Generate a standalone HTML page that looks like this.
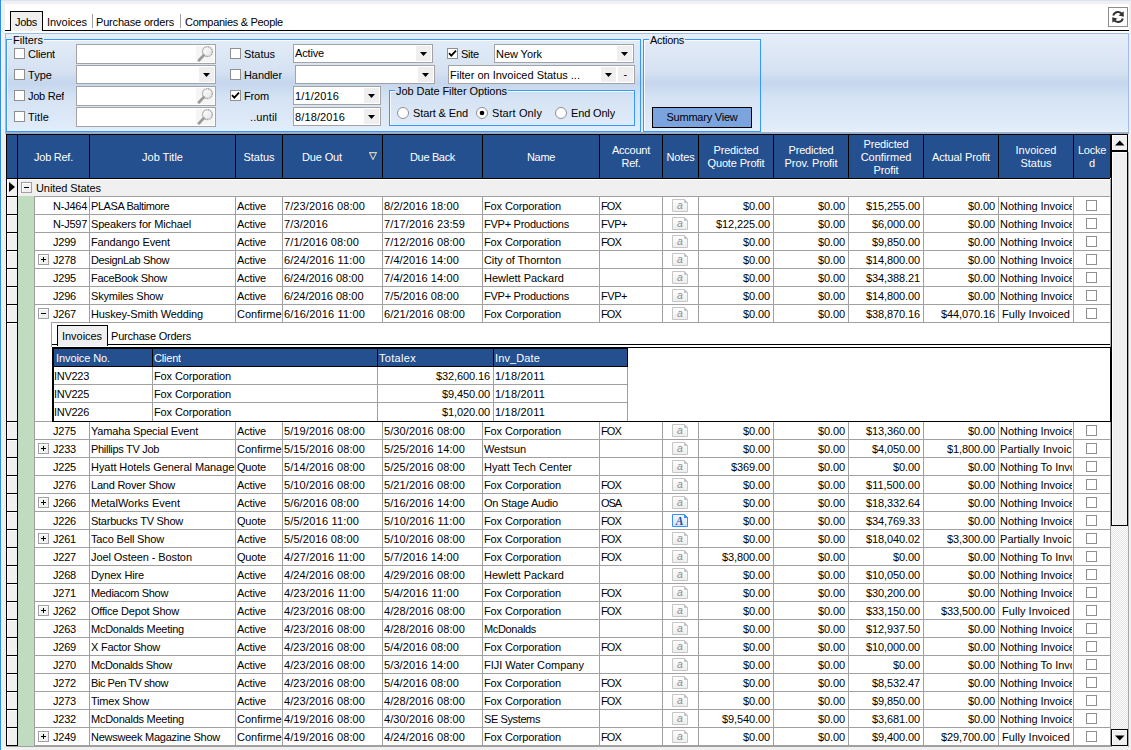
<!DOCTYPE html>
<html><head><meta charset="utf-8">
<style>
html,body{margin:0;padding:0;width:1131px;height:750px;overflow:hidden;background:#f0f0f0}
body{position:relative;font-family:"Liberation Sans",sans-serif;font-size:11px;color:#000}
div{position:absolute}
svg{position:absolute}
.t{white-space:nowrap;overflow:hidden}
.tab{line-height:18px}
.gl{line-height:13px;background:transparent}
.fl{line-height:14px}
.cell{line-height:17px}
.r{text-align:right}
.hd{color:#fff;text-align:center;line-height:13px}
.hds{color:#fff;line-height:17px}
</style></head><body>
<svg width="0" height="0" style="position:absolute;left:0;top:0"><defs>
<linearGradient id="nb" x1="0" y1="0" x2="0" y2="1"><stop offset="0" stop-color="#f4f9ff"/><stop offset="1" stop-color="#d2e5fb"/></linearGradient>
<linearGradient id="ng" x1="0" y1="0" x2="0" y2="1"><stop offset="0" stop-color="#ffffff"/><stop offset="1" stop-color="#ededed"/></linearGradient>
<linearGradient id="mg" x1="0" y1="0" x2="1" y2="1"><stop offset="0" stop-color="#fff"/><stop offset="1" stop-color="#e4e4e4"/></linearGradient>
</defs></svg>
<div style="left:0px;top:0px;width:1131px;height:750px;background:#f0f0f0"></div>
<div style="left:0px;top:0px;width:1px;height:750px;background:#2c8cf4"></div>
<div style="left:1px;top:0px;width:1130px;height:1px;background:#d6e4f5"></div>
<div style="left:1px;top:1px;width:1px;height:749px;background:#fbf6f0"></div>
<div style="left:5px;top:4px;width:1124px;height:128px;background:#fff"></div>
<div style="left:5px;top:30px;width:5px;height:1px;background:#000"></div>
<div style="left:42px;top:30px;width:1087px;height:1px;background:#000"></div>
<div style="left:10px;top:11px;width:33px;height:20px;background:#000"></div>
<div style="left:11px;top:12px;width:31px;height:19px;background:#efefef"></div>
<div class="t tab" style="left:15px;top:13px;"><span style="letter-spacing:-0.31px">Jobs</span></div>
<div class="t tab" style="left:47px;top:13px;"><span style="letter-spacing:-0.04px">Invoices</span></div>
<div style="left:92px;top:14px;width:1px;height:14px;background:#a0a0a0"></div>
<div class="t tab" style="left:96px;top:13px;"><span style="letter-spacing:-0.18px">Purchase orders</span></div>
<div style="left:180px;top:14px;width:1px;height:14px;background:#a0a0a0"></div>
<div class="t tab" style="left:185px;top:13px;"><span style="letter-spacing:-0.3px">Companies &amp; People</span></div>
<div style="left:1108px;top:7px;width:20px;height:20px;border:1px solid #8c8c8c;box-sizing:border-box;background:#fff"></div>
<svg style="position:absolute;left:1110px;top:9px" width="16" height="16" viewBox="0 0 16 16">
<path d="M3.2 6.6 A5 5 0 0 1 12.2 5.2" fill="none" stroke="#333" stroke-width="2"/>
<path d="M13.6 2.2 L13.8 7.8 L8.6 6.6 Z" fill="#333"/>
<path d="M12.8 9.4 A5 5 0 0 1 3.8 10.8" fill="none" stroke="#333" stroke-width="2"/>
<path d="M2.4 13.8 L2.2 8.2 L7.4 9.4 Z" fill="#333"/>
</svg>
<div style="left:5px;top:33px;width:1124px;height:100px;background:linear-gradient(#e5eef9 0%,#d6e2f2 38%,#c5d6ed 50%,#d4e2f3 64%,#e1ecfa 96%,#eaf2fd 100%);border:1px solid #9ebde6;border-bottom-color:#8db3e4;box-sizing:border-box"></div>
<div style="left:5px;top:133px;width:1124px;height:1px;background:#a8a8a8"></div>
<div style="left:6px;top:39px;width:635px;height:93px;border:1px solid #3399ff;box-sizing:border-box;box-shadow:inset 1px 1px 0 rgba(255,255,255,.8)"></div>
<div class="t gl" style="left:12px;top:34px;background:linear-gradient(#e4edf9,#dfe9f6);padding:0 1px 0 1px"><span style="letter-spacing:0.01px">Filters</span></div>
<div style="left:643px;top:39px;width:118px;height:93px;border:1px solid #3399ff;box-sizing:border-box;box-shadow:inset 1px 1px 0 rgba(255,255,255,.8)"></div>
<div class="t gl" style="left:649px;top:34px;background:linear-gradient(#e4edf9,#dfe9f6);padding:0 1px 0 1px"><span style="letter-spacing:-0.3px">Actions</span></div>
<div style="left:389px;top:90px;width:246px;height:36px;border:1px solid #3399ff;box-sizing:border-box;box-shadow:inset 1px 1px 0 rgba(255,255,255,.8)"></div>
<div class="t gl" style="left:395px;top:85px;background:linear-gradient(#c6d7ed,#d3e1f3);padding:0 1px 0 1px"><span style="letter-spacing:-0.07px">Job Date Filter Options</span></div>
<div style="left:14px;top:48px;width:11px;height:11px;border:1px solid #8f8f8f;box-sizing:border-box;background:#fff"></div>
<div class="t fl" style="left:28px;top:47px;"><span style="letter-spacing:-0.19px">Client</span></div>
<div style="left:76px;top:44px;width:140px;height:20px;border:1px solid #a3a3a3;box-sizing:border-box;background:#fff"></div>
<div style="left:196px;top:46px;width:18px;height:16px;background:#f5f5f5"></div>
<svg style="position:absolute;left:196px;top:46px" width="18" height="16" viewBox="0 0 18 16">
<circle cx="11.4" cy="5.6" r="4.9" fill="url(#mg)" stroke="#a8a8a8" stroke-width="1.3" stroke-dasharray="1.6 0.5"/>
<path d="M7.6 9.4 L3 14.2" stroke="#9a9a9a" stroke-width="2.8" stroke-linecap="round"/>
</svg>
<div style="left:14px;top:69px;width:11px;height:11px;border:1px solid #8f8f8f;box-sizing:border-box;background:#fff"></div>
<div class="t fl" style="left:28px;top:68px;"><span style="letter-spacing:0.04px">Type</span></div>
<div style="left:76px;top:65px;width:140px;height:19px;border:1px solid #a3a3a3;box-sizing:border-box;background:#fff"></div>
<div style="left:199px;top:67px;width:15px;height:15px;background:#efefef"></div>
<svg style="position:absolute;left:203px;top:73px" width="7" height="4" viewBox="0 0 7 4"><path d="M0 0 H7 L3.5 4 Z" fill="#000"/></svg>
<div style="left:14px;top:90px;width:11px;height:11px;border:1px solid #8f8f8f;box-sizing:border-box;background:#fff"></div>
<div class="t fl" style="left:28px;top:89px;"><span style="letter-spacing:-0.27px">Job Ref</span></div>
<div style="left:76px;top:86px;width:140px;height:20px;border:1px solid #a3a3a3;box-sizing:border-box;background:#fff"></div>
<div style="left:196px;top:88px;width:18px;height:16px;background:#f5f5f5"></div>
<svg style="position:absolute;left:196px;top:88px" width="18" height="16" viewBox="0 0 18 16">
<circle cx="11.4" cy="5.6" r="4.9" fill="url(#mg)" stroke="#a8a8a8" stroke-width="1.3" stroke-dasharray="1.6 0.5"/>
<path d="M7.6 9.4 L3 14.2" stroke="#9a9a9a" stroke-width="2.8" stroke-linecap="round"/>
</svg>
<div style="left:14px;top:111px;width:11px;height:11px;border:1px solid #8f8f8f;box-sizing:border-box;background:#fff"></div>
<div class="t fl" style="left:28px;top:110px;"><span style="letter-spacing:0.12px">Title</span></div>
<div style="left:76px;top:107px;width:140px;height:20px;border:1px solid #a3a3a3;box-sizing:border-box;background:#fff"></div>
<div style="left:196px;top:109px;width:18px;height:16px;background:#f5f5f5"></div>
<svg style="position:absolute;left:196px;top:109px" width="18" height="16" viewBox="0 0 18 16">
<circle cx="11.4" cy="5.6" r="4.9" fill="url(#mg)" stroke="#a8a8a8" stroke-width="1.3" stroke-dasharray="1.6 0.5"/>
<path d="M7.6 9.4 L3 14.2" stroke="#9a9a9a" stroke-width="2.8" stroke-linecap="round"/>
</svg>
<div style="left:230px;top:48px;width:11px;height:11px;border:1px solid #8f8f8f;box-sizing:border-box;background:#fff"></div>
<div class="t fl" style="left:244px;top:47px;"><span style="letter-spacing:-0.03px">Status</span></div>
<div style="left:293px;top:44px;width:140px;height:19px;border:1px solid #a3a3a3;box-sizing:border-box;background:#fff"></div>
<div style="left:416px;top:46px;width:15px;height:15px;background:#efefef"></div>
<svg style="position:absolute;left:420px;top:52px" width="7" height="4" viewBox="0 0 7 4"><path d="M0 0 H7 L3.5 4 Z" fill="#000"/></svg>
<div class="t fl" style="left:295px;top:46px;"><span style="letter-spacing:-0.16px">Active</span></div>
<div style="left:230px;top:69px;width:11px;height:11px;border:1px solid #8f8f8f;box-sizing:border-box;background:#fff"></div>
<div class="t fl" style="left:244px;top:68px;"><span style="letter-spacing:-0.08px">Handler</span></div>
<div style="left:295px;top:65px;width:140px;height:19px;border:1px solid #a3a3a3;box-sizing:border-box;background:#fff"></div>
<div style="left:418px;top:67px;width:15px;height:15px;background:#efefef"></div>
<svg style="position:absolute;left:422px;top:73px" width="7" height="4" viewBox="0 0 7 4"><path d="M0 0 H7 L3.5 4 Z" fill="#000"/></svg>
<div style="left:230px;top:90px;width:11px;height:11px;border:1px solid #8f8f8f;box-sizing:border-box;background:#fff"></div>
<svg style="position:absolute;left:231px;top:91px" width="9" height="9" viewBox="0 0 9 9"><path d="M1 4.2 L3.3 6.6 L8 1.6" fill="none" stroke="#000" stroke-width="1.8"/></svg>
<div class="t fl" style="left:244px;top:89px;"><span style="letter-spacing:-0.17px">From</span></div>
<div style="left:293px;top:86px;width:88px;height:19px;border:1px solid #a3a3a3;box-sizing:border-box;background:#fff"></div>
<div style="left:364px;top:88px;width:15px;height:15px;background:#efefef"></div>
<svg style="position:absolute;left:368px;top:94px" width="7" height="4" viewBox="0 0 7 4"><path d="M0 0 H7 L3.5 4 Z" fill="#000"/></svg>
<div class="t fl" style="left:295px;top:89px;"><span style="letter-spacing:0.15px">1/1/2016</span></div>
<div class="t fl" style="left:250px;top:110px;"><span style="letter-spacing:0.1px">..until</span></div>
<div style="left:293px;top:107px;width:88px;height:19px;border:1px solid #a3a3a3;box-sizing:border-box;background:#fff"></div>
<div style="left:364px;top:109px;width:15px;height:15px;background:#efefef"></div>
<svg style="position:absolute;left:368px;top:115px" width="7" height="4" viewBox="0 0 7 4"><path d="M0 0 H7 L3.5 4 Z" fill="#000"/></svg>
<div class="t fl" style="left:295px;top:110px;"><span style="letter-spacing:0.12px">8/18/2016</span></div>
<div style="left:447px;top:48px;width:11px;height:11px;border:1px solid #8f8f8f;box-sizing:border-box;background:#fff"></div>
<svg style="position:absolute;left:448px;top:49px" width="9" height="9" viewBox="0 0 9 9"><path d="M1 4.2 L3.3 6.6 L8 1.6" fill="none" stroke="#000" stroke-width="1.8"/></svg>
<div class="t fl" style="left:461px;top:47px;"><span style="letter-spacing:-0.24px">Site</span></div>
<div style="left:494px;top:44px;width:140px;height:19px;border:1px solid #a3a3a3;box-sizing:border-box;background:#fff"></div>
<div style="left:617px;top:46px;width:15px;height:15px;background:#efefef"></div>
<svg style="position:absolute;left:621px;top:52px" width="7" height="4" viewBox="0 0 7 4"><path d="M0 0 H7 L3.5 4 Z" fill="#000"/></svg>
<div class="t fl" style="left:496px;top:47px;"><span style="letter-spacing:-0.06px">New York</span></div>
<div style="left:448px;top:65px;width:187px;height:19px;border:1px solid #a3a3a3;box-sizing:border-box;background:#fff"></div>
<div class="t fl" style="left:450px;top:68px;"><span style="letter-spacing:-0.01px">Filter on Invoiced Status ...</span></div>
<div style="left:601px;top:67px;width:15px;height:15px;background:#efefef"></div>
<svg style="position:absolute;left:605px;top:73px" width="7" height="4" viewBox="0 0 7 4"><path d="M0 0 H7 L3.5 4 Z" fill="#000"/></svg>
<div style="left:618px;top:67px;width:15px;height:15px;background:#efefef"></div>
<div class="t fl" style="left:618px;top:67px;width:15px;text-align:center"><span style="letter-spacing:0.33px">-</span></div>
<svg style="position:absolute;left:397px;top:107px" width="12" height="12" viewBox="0 0 12 12"><circle cx="6" cy="6" r="5.5" fill="#fff" stroke="#8f8f8f" stroke-width="1"/></svg>
<div class="t fl" style="left:413px;top:106px;"><span style="letter-spacing:-0.12px">Start &amp; End</span></div>
<svg style="position:absolute;left:476px;top:107px" width="12" height="12" viewBox="0 0 12 12"><circle cx="6" cy="6" r="5.5" fill="#fff" stroke="#8f8f8f" stroke-width="1"/><circle cx="6" cy="6" r="2.3" fill="#000"/></svg>
<div class="t fl" style="left:492px;top:106px;"><span style="letter-spacing:0.11px">Start Only</span></div>
<svg style="position:absolute;left:555px;top:107px" width="12" height="12" viewBox="0 0 12 12"><circle cx="6" cy="6" r="5.5" fill="#fff" stroke="#8f8f8f" stroke-width="1"/></svg>
<div class="t fl" style="left:571px;top:106px;"><span style="letter-spacing:-0.16px">End Only</span></div>
<div style="left:652px;top:107px;width:100px;height:21px;border:1px solid #000;box-sizing:border-box;background:#7ba4df"></div>
<div class="t fl" style="left:652px;top:110px;width:100px;text-align:center"><span style="letter-spacing:-0.23px">Summary View</span></div>
<div style="left:6px;top:134px;width:1106px;height:613px;background:#fff"></div>
<div style="left:6px;top:134px;width:1106px;height:1px;background:#000"></div>
<div style="left:6px;top:134px;width:1px;height:612px;background:#000"></div>
<div style="left:7px;top:135px;width:1103px;height:43px;background:#24508f"></div>
<div style="left:6px;top:178px;width:1104px;height:1px;background:#000"></div>
<div style="left:17px;top:135px;width:1px;height:43px;background:#000"></div>
<div style="left:89px;top:135px;width:1px;height:43px;background:#000"></div>
<div style="left:235px;top:135px;width:1px;height:43px;background:#000"></div>
<div style="left:282px;top:135px;width:1px;height:43px;background:#000"></div>
<div style="left:382px;top:135px;width:1px;height:43px;background:#000"></div>
<div style="left:482px;top:135px;width:1px;height:43px;background:#000"></div>
<div style="left:599px;top:135px;width:1px;height:43px;background:#000"></div>
<div style="left:662px;top:135px;width:1px;height:43px;background:#000"></div>
<div style="left:698px;top:135px;width:1px;height:43px;background:#000"></div>
<div style="left:773px;top:135px;width:1px;height:43px;background:#000"></div>
<div style="left:848px;top:135px;width:1px;height:43px;background:#000"></div>
<div style="left:923px;top:135px;width:1px;height:43px;background:#000"></div>
<div style="left:998px;top:135px;width:1px;height:43px;background:#000"></div>
<div style="left:1073px;top:135px;width:1px;height:43px;background:#000"></div>
<div style="left:1110px;top:135px;width:1px;height:43px;background:#000"></div>
<div style="left:1111px;top:135px;width:1px;height:43px;background:#000"></div>
<div class="t hd" style="left:18px;top:151px;width:71px;"><span style="letter-spacing:-0.25px">Job Ref.</span></div>
<div class="t hd" style="left:90px;top:151px;width:145px;">Job Title</div>
<div class="t hd" style="left:236px;top:151px;width:46px;"><span style="letter-spacing:-0.03px">Status</span></div>
<div class="t hd" style="left:283px;top:151px;width:78px;"><span style="letter-spacing:-0.14px">Due Out</span></div>
<div class="t hd" style="left:383px;top:151px;width:99px;"><span style="letter-spacing:-0.34px">Due Back</span></div>
<div class="t hd" style="left:483px;top:151px;width:116px;"><span style="letter-spacing:-0.34px">Name</span></div>
<div class="t hd" style="left:600px;top:144px;width:62px;"><span style="letter-spacing:-0.25px">Account</span><br><span style="letter-spacing:-0.3px">Ref.</span></div>
<div class="t hd" style="left:663px;top:151px;width:35px;"><span style="letter-spacing:-0.15px">Notes</span></div>
<div class="t hd" style="left:699px;top:144px;width:74px;"><span style="letter-spacing:-0.16px">Predicted</span><br><span style="letter-spacing:-0.14px">Quote Profit</span></div>
<div class="t hd" style="left:774px;top:144px;width:74px;"><span style="letter-spacing:-0.16px">Predicted</span><br><span style="letter-spacing:-0.05px">Prov. Profit</span></div>
<div class="t hd" style="left:849px;top:138px;width:74px;"><span style="letter-spacing:-0.16px">Predicted</span><br>Confirmed<br><span style="letter-spacing:-0.11px">Profit</span></div>
<div class="t hd" style="left:924px;top:151px;width:74px;"><span style="letter-spacing:-0.1px">Actual Profit</span></div>
<div class="t hd" style="left:999px;top:144px;width:74px;">Invoiced<br><span style="letter-spacing:-0.03px">Status</span></div>
<div class="t hd" style="left:1074px;top:144px;width:36px;"><span style="letter-spacing:-0.27px">Locke</span><br><span style="letter-spacing:-0.12px">d</span></div>
<svg style="position:absolute;left:369px;top:152px" width="8" height="8" viewBox="0 0 8 8"><path d="M0.5 0.6 H7.5 L4 7.5 Z" fill="none" stroke="#d9d0b8" stroke-width="1.1"/></svg>
<div style="left:6px;top:178px;width:12px;height:19px;background:#000"></div>
<div style="left:7px;top:179px;width:10px;height:17px;background:#fff"></div>
<div style="left:8px;top:180px;width:9px;height:16px;background:#f0f0f0"></div>
<svg style="position:absolute;left:9px;top:182px" width="7" height="10" viewBox="0 0 7 10"><path d="M0 0 L6 5 L0 10 Z" fill="#000"/></svg>
<div style="left:18px;top:179px;width:1092px;height:17px;background:#f0f0f0"></div>
<div style="left:18px;top:179px;width:1092px;height:1px;background:#fff"></div>
<div style="left:18px;top:196px;width:1092px;height:1px;background:#a0a0a0"></div>
<div style="left:21px;top:182px;width:11px;height:11px;border:1px solid #a0a0a0;box-sizing:border-box;background:#f0f0f0;box-shadow:inset 1px 1px 0 #fff"></div>
<div style="left:24px;top:187px;width:5px;height:1px;background:#000"></div>
<div class="t cell" style="left:36px;top:180px;"><span style="letter-spacing:-0.08px">United States</span></div>
<div style="left:18px;top:196px;width:16px;height:550px;background:#c0dcc0"></div>
<div style="left:34px;top:196px;width:1px;height:550px;background:#a0a0a0"></div>
<div style="left:6px;top:196px;width:12px;height:19px;background:#000"></div>
<div style="left:7px;top:197px;width:10px;height:17px;background:#fff"></div>
<div style="left:8px;top:198px;width:9px;height:16px;background:#f0f0f0"></div>
<div style="left:35px;top:214px;width:1075px;height:1px;background:#a0a0a0"></div>
<div style="left:89px;top:197px;width:1px;height:17px;background:#a0a0a0"></div>
<div style="left:235px;top:197px;width:1px;height:17px;background:#a0a0a0"></div>
<div style="left:282px;top:197px;width:1px;height:17px;background:#a0a0a0"></div>
<div style="left:382px;top:197px;width:1px;height:17px;background:#a0a0a0"></div>
<div style="left:482px;top:197px;width:1px;height:17px;background:#a0a0a0"></div>
<div style="left:599px;top:197px;width:1px;height:17px;background:#a0a0a0"></div>
<div style="left:662px;top:197px;width:1px;height:17px;background:#a0a0a0"></div>
<div style="left:698px;top:197px;width:1px;height:17px;background:#a0a0a0"></div>
<div style="left:773px;top:197px;width:1px;height:17px;background:#a0a0a0"></div>
<div style="left:848px;top:197px;width:1px;height:17px;background:#a0a0a0"></div>
<div style="left:923px;top:197px;width:1px;height:17px;background:#a0a0a0"></div>
<div style="left:998px;top:197px;width:1px;height:17px;background:#a0a0a0"></div>
<div style="left:1073px;top:197px;width:1px;height:17px;background:#a0a0a0"></div>
<div class="t cell" style="left:53px;top:198px;width:36px;"><span style="letter-spacing:-0.24px">N-J464</span></div>
<div class="t cell" style="left:91px;top:198px;width:144px;"><span style="letter-spacing:-0.42px">PLASA Baltimore</span></div>
<div class="t cell" style="left:237px;top:198px;width:45px;"><span style="letter-spacing:-0.16px">Active</span></div>
<div class="t cell" style="left:284px;top:198px;width:98px;"><span style="letter-spacing:0.1px">7/23/2016 08:00</span></div>
<div class="t cell" style="left:384px;top:198px;width:98px;"><span style="letter-spacing:0.11px">8/2/2016 18:00</span></div>
<div class="t cell" style="left:484px;top:198px;width:115px;"><span style="letter-spacing:-0.12px">Fox Corporation</span></div>
<div class="t cell" style="left:601px;top:198px;width:61px;"><span style="letter-spacing:-0.88px">FOX</span></div>
<svg style="position:absolute;left:672px;top:199px" width="16" height="14" viewBox="0 0 16 14">
<path d="M0.5 0.5 H12.5 L15.5 3.5 V12.5 H0.5 Z" fill="url(#ng)" stroke="#c6c6c6" stroke-width="1"/>
<path d="M12.5 0.5 L15.5 3.5 H12.5 Z" fill="#bcbcbc" stroke="#c6c6c6" stroke-width="1" stroke-linejoin="round"/>
<text x="7.8" y="10.2" text-anchor="middle" font-family="Liberation Sans" font-style="italic" font-size="10.5" fill="#8e8e8e">a</text>
</svg>
<div class="t cell r" style="left:699px;top:198px;width:71px;"><span style="letter-spacing:-0.11px">$0.00</span></div>
<div class="t cell r" style="left:774px;top:198px;width:71px;"><span style="letter-spacing:-0.11px">$0.00</span></div>
<div class="t cell r" style="left:849px;top:198px;width:71px;"><span style="letter-spacing:-0.11px">$15,255.00</span></div>
<div class="t cell r" style="left:924px;top:198px;width:71px;"><span style="letter-spacing:-0.11px">$0.00</span></div>
<div class="t cell" style="left:1000px;top:198px;width:72px;"><span style="letter-spacing:-0.06px">Nothing Invoiced</span></div>
<div style="left:1086px;top:200px;width:11px;height:11px;border:1px solid #8f8f8f;box-sizing:border-box;background:#fff"></div>
<div style="left:6px;top:214px;width:12px;height:19px;background:#000"></div>
<div style="left:7px;top:215px;width:10px;height:17px;background:#fff"></div>
<div style="left:8px;top:216px;width:9px;height:16px;background:#f0f0f0"></div>
<div style="left:35px;top:232px;width:1075px;height:1px;background:#a0a0a0"></div>
<div style="left:89px;top:215px;width:1px;height:17px;background:#a0a0a0"></div>
<div style="left:235px;top:215px;width:1px;height:17px;background:#a0a0a0"></div>
<div style="left:282px;top:215px;width:1px;height:17px;background:#a0a0a0"></div>
<div style="left:382px;top:215px;width:1px;height:17px;background:#a0a0a0"></div>
<div style="left:482px;top:215px;width:1px;height:17px;background:#a0a0a0"></div>
<div style="left:599px;top:215px;width:1px;height:17px;background:#a0a0a0"></div>
<div style="left:662px;top:215px;width:1px;height:17px;background:#a0a0a0"></div>
<div style="left:698px;top:215px;width:1px;height:17px;background:#a0a0a0"></div>
<div style="left:773px;top:215px;width:1px;height:17px;background:#a0a0a0"></div>
<div style="left:848px;top:215px;width:1px;height:17px;background:#a0a0a0"></div>
<div style="left:923px;top:215px;width:1px;height:17px;background:#a0a0a0"></div>
<div style="left:998px;top:215px;width:1px;height:17px;background:#a0a0a0"></div>
<div style="left:1073px;top:215px;width:1px;height:17px;background:#a0a0a0"></div>
<div class="t cell" style="left:53px;top:216px;width:36px;"><span style="letter-spacing:-0.24px">N-J597</span></div>
<div class="t cell" style="left:91px;top:216px;width:144px;"><span style="letter-spacing:-0.17px">Speakers for Michael</span></div>
<div class="t cell" style="left:237px;top:216px;width:45px;"><span style="letter-spacing:-0.16px">Active</span></div>
<div class="t cell" style="left:284px;top:216px;width:98px;"><span style="letter-spacing:0.15px">7/3/2016</span></div>
<div class="t cell" style="left:384px;top:216px;width:98px;"><span style="letter-spacing:0.1px">7/17/2016 23:59</span></div>
<div class="t cell" style="left:484px;top:216px;width:115px;"><span style="letter-spacing:-0.25px">FVP+ Productions</span></div>
<div class="t cell" style="left:601px;top:216px;width:61px;"><span style="letter-spacing:-0.46px">FVP+</span></div>
<svg style="position:absolute;left:672px;top:217px" width="16" height="14" viewBox="0 0 16 14">
<path d="M0.5 0.5 H12.5 L15.5 3.5 V12.5 H0.5 Z" fill="url(#ng)" stroke="#c6c6c6" stroke-width="1"/>
<path d="M12.5 0.5 L15.5 3.5 H12.5 Z" fill="#bcbcbc" stroke="#c6c6c6" stroke-width="1" stroke-linejoin="round"/>
<text x="7.8" y="10.2" text-anchor="middle" font-family="Liberation Sans" font-style="italic" font-size="10.5" fill="#8e8e8e">a</text>
</svg>
<div class="t cell r" style="left:699px;top:216px;width:71px;"><span style="letter-spacing:-0.11px">$12,225.00</span></div>
<div class="t cell r" style="left:774px;top:216px;width:71px;"><span style="letter-spacing:-0.11px">$0.00</span></div>
<div class="t cell r" style="left:849px;top:216px;width:71px;"><span style="letter-spacing:-0.1px">$6,000.00</span></div>
<div class="t cell r" style="left:924px;top:216px;width:71px;"><span style="letter-spacing:-0.11px">$0.00</span></div>
<div class="t cell" style="left:1000px;top:216px;width:72px;"><span style="letter-spacing:-0.06px">Nothing Invoiced</span></div>
<div style="left:1086px;top:218px;width:11px;height:11px;border:1px solid #8f8f8f;box-sizing:border-box;background:#fff"></div>
<div style="left:6px;top:232px;width:12px;height:19px;background:#000"></div>
<div style="left:7px;top:233px;width:10px;height:17px;background:#fff"></div>
<div style="left:8px;top:234px;width:9px;height:16px;background:#f0f0f0"></div>
<div style="left:35px;top:250px;width:1075px;height:1px;background:#a0a0a0"></div>
<div style="left:89px;top:233px;width:1px;height:17px;background:#a0a0a0"></div>
<div style="left:235px;top:233px;width:1px;height:17px;background:#a0a0a0"></div>
<div style="left:282px;top:233px;width:1px;height:17px;background:#a0a0a0"></div>
<div style="left:382px;top:233px;width:1px;height:17px;background:#a0a0a0"></div>
<div style="left:482px;top:233px;width:1px;height:17px;background:#a0a0a0"></div>
<div style="left:599px;top:233px;width:1px;height:17px;background:#a0a0a0"></div>
<div style="left:662px;top:233px;width:1px;height:17px;background:#a0a0a0"></div>
<div style="left:698px;top:233px;width:1px;height:17px;background:#a0a0a0"></div>
<div style="left:773px;top:233px;width:1px;height:17px;background:#a0a0a0"></div>
<div style="left:848px;top:233px;width:1px;height:17px;background:#a0a0a0"></div>
<div style="left:923px;top:233px;width:1px;height:17px;background:#a0a0a0"></div>
<div style="left:998px;top:233px;width:1px;height:17px;background:#a0a0a0"></div>
<div style="left:1073px;top:233px;width:1px;height:17px;background:#a0a0a0"></div>
<div class="t cell" style="left:53px;top:234px;width:36px;"><span style="letter-spacing:-0.21px">J299</span></div>
<div class="t cell" style="left:91px;top:234px;width:144px;"><span style="letter-spacing:-0.12px">Fandango Event</span></div>
<div class="t cell" style="left:237px;top:234px;width:45px;"><span style="letter-spacing:-0.16px">Active</span></div>
<div class="t cell" style="left:284px;top:234px;width:98px;"><span style="letter-spacing:0.11px">7/1/2016 08:00</span></div>
<div class="t cell" style="left:384px;top:234px;width:98px;"><span style="letter-spacing:0.1px">7/12/2016 08:00</span></div>
<div class="t cell" style="left:484px;top:234px;width:115px;"><span style="letter-spacing:-0.12px">Fox Corporation</span></div>
<div class="t cell" style="left:601px;top:234px;width:61px;"><span style="letter-spacing:-0.88px">FOX</span></div>
<svg style="position:absolute;left:672px;top:235px" width="16" height="14" viewBox="0 0 16 14">
<path d="M0.5 0.5 H12.5 L15.5 3.5 V12.5 H0.5 Z" fill="url(#ng)" stroke="#c6c6c6" stroke-width="1"/>
<path d="M12.5 0.5 L15.5 3.5 H12.5 Z" fill="#bcbcbc" stroke="#c6c6c6" stroke-width="1" stroke-linejoin="round"/>
<text x="7.8" y="10.2" text-anchor="middle" font-family="Liberation Sans" font-style="italic" font-size="10.5" fill="#8e8e8e">a</text>
</svg>
<div class="t cell r" style="left:699px;top:234px;width:71px;"><span style="letter-spacing:-0.11px">$0.00</span></div>
<div class="t cell r" style="left:774px;top:234px;width:71px;"><span style="letter-spacing:-0.11px">$0.00</span></div>
<div class="t cell r" style="left:849px;top:234px;width:71px;"><span style="letter-spacing:-0.1px">$9,850.00</span></div>
<div class="t cell r" style="left:924px;top:234px;width:71px;"><span style="letter-spacing:-0.11px">$0.00</span></div>
<div class="t cell" style="left:1000px;top:234px;width:72px;"><span style="letter-spacing:-0.06px">Nothing Invoiced</span></div>
<div style="left:1086px;top:236px;width:11px;height:11px;border:1px solid #8f8f8f;box-sizing:border-box;background:#fff"></div>
<div style="left:6px;top:250px;width:12px;height:19px;background:#000"></div>
<div style="left:7px;top:251px;width:10px;height:17px;background:#fff"></div>
<div style="left:8px;top:252px;width:9px;height:16px;background:#f0f0f0"></div>
<div style="left:35px;top:268px;width:1075px;height:1px;background:#a0a0a0"></div>
<div style="left:89px;top:251px;width:1px;height:17px;background:#a0a0a0"></div>
<div style="left:235px;top:251px;width:1px;height:17px;background:#a0a0a0"></div>
<div style="left:282px;top:251px;width:1px;height:17px;background:#a0a0a0"></div>
<div style="left:382px;top:251px;width:1px;height:17px;background:#a0a0a0"></div>
<div style="left:482px;top:251px;width:1px;height:17px;background:#a0a0a0"></div>
<div style="left:599px;top:251px;width:1px;height:17px;background:#a0a0a0"></div>
<div style="left:662px;top:251px;width:1px;height:17px;background:#a0a0a0"></div>
<div style="left:698px;top:251px;width:1px;height:17px;background:#a0a0a0"></div>
<div style="left:773px;top:251px;width:1px;height:17px;background:#a0a0a0"></div>
<div style="left:848px;top:251px;width:1px;height:17px;background:#a0a0a0"></div>
<div style="left:923px;top:251px;width:1px;height:17px;background:#a0a0a0"></div>
<div style="left:998px;top:251px;width:1px;height:17px;background:#a0a0a0"></div>
<div style="left:1073px;top:251px;width:1px;height:17px;background:#a0a0a0"></div>
<div style="left:38px;top:254px;width:11px;height:11px;border:1px solid #a0a0a0;box-sizing:border-box;background:#f0f0f0;box-shadow:inset 1px 1px 0 #fff"></div>
<div style="left:41px;top:259px;width:5px;height:1px;background:#000"></div>
<div style="left:43px;top:257px;width:1px;height:5px;background:#000"></div>
<div class="t cell" style="left:53px;top:252px;width:36px;"><span style="letter-spacing:-0.21px">J278</span></div>
<div class="t cell" style="left:91px;top:252px;width:144px;"><span style="letter-spacing:-0.37px">DesignLab Show</span></div>
<div class="t cell" style="left:237px;top:252px;width:45px;"><span style="letter-spacing:-0.16px">Active</span></div>
<div class="t cell" style="left:284px;top:252px;width:98px;"><span style="letter-spacing:0.15px">6/24/2016 11:00</span></div>
<div class="t cell" style="left:384px;top:252px;width:98px;"><span style="letter-spacing:0.11px">7/4/2016 14:00</span></div>
<div class="t cell" style="left:484px;top:252px;width:115px;"><span style="letter-spacing:-0.07px">City of Thornton</span></div>
<div class="t cell" style="left:601px;top:252px;width:61px;"></div>
<svg style="position:absolute;left:672px;top:253px" width="16" height="14" viewBox="0 0 16 14">
<path d="M0.5 0.5 H12.5 L15.5 3.5 V12.5 H0.5 Z" fill="url(#ng)" stroke="#c6c6c6" stroke-width="1"/>
<path d="M12.5 0.5 L15.5 3.5 H12.5 Z" fill="#bcbcbc" stroke="#c6c6c6" stroke-width="1" stroke-linejoin="round"/>
<text x="7.8" y="10.2" text-anchor="middle" font-family="Liberation Sans" font-style="italic" font-size="10.5" fill="#8e8e8e">a</text>
</svg>
<div class="t cell r" style="left:699px;top:252px;width:71px;"><span style="letter-spacing:-0.11px">$0.00</span></div>
<div class="t cell r" style="left:774px;top:252px;width:71px;"><span style="letter-spacing:-0.11px">$0.00</span></div>
<div class="t cell r" style="left:849px;top:252px;width:71px;"><span style="letter-spacing:-0.11px">$14,800.00</span></div>
<div class="t cell r" style="left:924px;top:252px;width:71px;"><span style="letter-spacing:-0.11px">$0.00</span></div>
<div class="t cell" style="left:1000px;top:252px;width:72px;"><span style="letter-spacing:-0.06px">Nothing Invoiced</span></div>
<div style="left:1086px;top:254px;width:11px;height:11px;border:1px solid #8f8f8f;box-sizing:border-box;background:#fff"></div>
<div style="left:6px;top:268px;width:12px;height:19px;background:#000"></div>
<div style="left:7px;top:269px;width:10px;height:17px;background:#fff"></div>
<div style="left:8px;top:270px;width:9px;height:16px;background:#f0f0f0"></div>
<div style="left:35px;top:286px;width:1075px;height:1px;background:#a0a0a0"></div>
<div style="left:89px;top:269px;width:1px;height:17px;background:#a0a0a0"></div>
<div style="left:235px;top:269px;width:1px;height:17px;background:#a0a0a0"></div>
<div style="left:282px;top:269px;width:1px;height:17px;background:#a0a0a0"></div>
<div style="left:382px;top:269px;width:1px;height:17px;background:#a0a0a0"></div>
<div style="left:482px;top:269px;width:1px;height:17px;background:#a0a0a0"></div>
<div style="left:599px;top:269px;width:1px;height:17px;background:#a0a0a0"></div>
<div style="left:662px;top:269px;width:1px;height:17px;background:#a0a0a0"></div>
<div style="left:698px;top:269px;width:1px;height:17px;background:#a0a0a0"></div>
<div style="left:773px;top:269px;width:1px;height:17px;background:#a0a0a0"></div>
<div style="left:848px;top:269px;width:1px;height:17px;background:#a0a0a0"></div>
<div style="left:923px;top:269px;width:1px;height:17px;background:#a0a0a0"></div>
<div style="left:998px;top:269px;width:1px;height:17px;background:#a0a0a0"></div>
<div style="left:1073px;top:269px;width:1px;height:17px;background:#a0a0a0"></div>
<div class="t cell" style="left:53px;top:270px;width:36px;"><span style="letter-spacing:-0.21px">J295</span></div>
<div class="t cell" style="left:91px;top:270px;width:144px;"><span style="letter-spacing:-0.32px">FaceBook Show</span></div>
<div class="t cell" style="left:237px;top:270px;width:45px;"><span style="letter-spacing:-0.16px">Active</span></div>
<div class="t cell" style="left:284px;top:270px;width:98px;">6/24/2016 08:00</div>
<div class="t cell" style="left:384px;top:270px;width:98px;"><span style="letter-spacing:0.11px">7/4/2016 14:00</span></div>
<div class="t cell" style="left:484px;top:270px;width:115px;"><span style="letter-spacing:-0.01px">Hewlett Packard</span></div>
<div class="t cell" style="left:601px;top:270px;width:61px;"></div>
<svg style="position:absolute;left:672px;top:271px" width="16" height="14" viewBox="0 0 16 14">
<path d="M0.5 0.5 H12.5 L15.5 3.5 V12.5 H0.5 Z" fill="url(#ng)" stroke="#c6c6c6" stroke-width="1"/>
<path d="M12.5 0.5 L15.5 3.5 H12.5 Z" fill="#bcbcbc" stroke="#c6c6c6" stroke-width="1" stroke-linejoin="round"/>
<text x="7.8" y="10.2" text-anchor="middle" font-family="Liberation Sans" font-style="italic" font-size="10.5" fill="#8e8e8e">a</text>
</svg>
<div class="t cell r" style="left:699px;top:270px;width:71px;"><span style="letter-spacing:-0.11px">$0.00</span></div>
<div class="t cell r" style="left:774px;top:270px;width:71px;"><span style="letter-spacing:-0.11px">$0.00</span></div>
<div class="t cell r" style="left:849px;top:270px;width:71px;"><span style="letter-spacing:-0.11px">$34,388.21</span></div>
<div class="t cell r" style="left:924px;top:270px;width:71px;"><span style="letter-spacing:-0.11px">$0.00</span></div>
<div class="t cell" style="left:1000px;top:270px;width:72px;"><span style="letter-spacing:-0.06px">Nothing Invoiced</span></div>
<div style="left:1086px;top:272px;width:11px;height:11px;border:1px solid #8f8f8f;box-sizing:border-box;background:#fff"></div>
<div style="left:6px;top:286px;width:12px;height:19px;background:#000"></div>
<div style="left:7px;top:287px;width:10px;height:17px;background:#fff"></div>
<div style="left:8px;top:288px;width:9px;height:16px;background:#f0f0f0"></div>
<div style="left:35px;top:304px;width:1075px;height:1px;background:#a0a0a0"></div>
<div style="left:89px;top:287px;width:1px;height:17px;background:#a0a0a0"></div>
<div style="left:235px;top:287px;width:1px;height:17px;background:#a0a0a0"></div>
<div style="left:282px;top:287px;width:1px;height:17px;background:#a0a0a0"></div>
<div style="left:382px;top:287px;width:1px;height:17px;background:#a0a0a0"></div>
<div style="left:482px;top:287px;width:1px;height:17px;background:#a0a0a0"></div>
<div style="left:599px;top:287px;width:1px;height:17px;background:#a0a0a0"></div>
<div style="left:662px;top:287px;width:1px;height:17px;background:#a0a0a0"></div>
<div style="left:698px;top:287px;width:1px;height:17px;background:#a0a0a0"></div>
<div style="left:773px;top:287px;width:1px;height:17px;background:#a0a0a0"></div>
<div style="left:848px;top:287px;width:1px;height:17px;background:#a0a0a0"></div>
<div style="left:923px;top:287px;width:1px;height:17px;background:#a0a0a0"></div>
<div style="left:998px;top:287px;width:1px;height:17px;background:#a0a0a0"></div>
<div style="left:1073px;top:287px;width:1px;height:17px;background:#a0a0a0"></div>
<div class="t cell" style="left:53px;top:288px;width:36px;"><span style="letter-spacing:-0.21px">J296</span></div>
<div class="t cell" style="left:91px;top:288px;width:144px;"><span style="letter-spacing:-0.2px">Skymiles Show</span></div>
<div class="t cell" style="left:237px;top:288px;width:45px;"><span style="letter-spacing:-0.16px">Active</span></div>
<div class="t cell" style="left:284px;top:288px;width:98px;">6/24/2016 08:00</div>
<div class="t cell" style="left:384px;top:288px;width:98px;"><span style="letter-spacing:0.11px">7/5/2016 08:00</span></div>
<div class="t cell" style="left:484px;top:288px;width:115px;"><span style="letter-spacing:-0.25px">FVP+ Productions</span></div>
<div class="t cell" style="left:601px;top:288px;width:61px;"><span style="letter-spacing:-0.46px">FVP+</span></div>
<svg style="position:absolute;left:672px;top:289px" width="16" height="14" viewBox="0 0 16 14">
<path d="M0.5 0.5 H12.5 L15.5 3.5 V12.5 H0.5 Z" fill="url(#ng)" stroke="#c6c6c6" stroke-width="1"/>
<path d="M12.5 0.5 L15.5 3.5 H12.5 Z" fill="#bcbcbc" stroke="#c6c6c6" stroke-width="1" stroke-linejoin="round"/>
<text x="7.8" y="10.2" text-anchor="middle" font-family="Liberation Sans" font-style="italic" font-size="10.5" fill="#8e8e8e">a</text>
</svg>
<div class="t cell r" style="left:699px;top:288px;width:71px;"><span style="letter-spacing:-0.11px">$0.00</span></div>
<div class="t cell r" style="left:774px;top:288px;width:71px;"><span style="letter-spacing:-0.11px">$0.00</span></div>
<div class="t cell r" style="left:849px;top:288px;width:71px;"><span style="letter-spacing:-0.11px">$14,800.00</span></div>
<div class="t cell r" style="left:924px;top:288px;width:71px;"><span style="letter-spacing:-0.11px">$0.00</span></div>
<div class="t cell" style="left:1000px;top:288px;width:72px;"><span style="letter-spacing:-0.06px">Nothing Invoiced</span></div>
<div style="left:1086px;top:290px;width:11px;height:11px;border:1px solid #8f8f8f;box-sizing:border-box;background:#fff"></div>
<div style="left:6px;top:304px;width:12px;height:19px;background:#000"></div>
<div style="left:7px;top:305px;width:10px;height:17px;background:#fff"></div>
<div style="left:8px;top:306px;width:9px;height:16px;background:#f0f0f0"></div>
<div style="left:35px;top:322px;width:1075px;height:1px;background:#a0a0a0"></div>
<div style="left:89px;top:305px;width:1px;height:17px;background:#a0a0a0"></div>
<div style="left:235px;top:305px;width:1px;height:17px;background:#a0a0a0"></div>
<div style="left:282px;top:305px;width:1px;height:17px;background:#a0a0a0"></div>
<div style="left:382px;top:305px;width:1px;height:17px;background:#a0a0a0"></div>
<div style="left:482px;top:305px;width:1px;height:17px;background:#a0a0a0"></div>
<div style="left:599px;top:305px;width:1px;height:17px;background:#a0a0a0"></div>
<div style="left:662px;top:305px;width:1px;height:17px;background:#a0a0a0"></div>
<div style="left:698px;top:305px;width:1px;height:17px;background:#a0a0a0"></div>
<div style="left:773px;top:305px;width:1px;height:17px;background:#a0a0a0"></div>
<div style="left:848px;top:305px;width:1px;height:17px;background:#a0a0a0"></div>
<div style="left:923px;top:305px;width:1px;height:17px;background:#a0a0a0"></div>
<div style="left:998px;top:305px;width:1px;height:17px;background:#a0a0a0"></div>
<div style="left:1073px;top:305px;width:1px;height:17px;background:#a0a0a0"></div>
<div style="left:38px;top:308px;width:11px;height:11px;border:1px solid #a0a0a0;box-sizing:border-box;background:#f0f0f0;box-shadow:inset 1px 1px 0 #fff"></div>
<div style="left:41px;top:313px;width:5px;height:1px;background:#000"></div>
<div class="t cell" style="left:53px;top:306px;width:36px;"><span style="letter-spacing:-0.21px">J267</span></div>
<div class="t cell" style="left:91px;top:306px;width:144px;"><span style="letter-spacing:-0.14px">Huskey-Smith Wedding</span></div>
<div class="t cell" style="left:237px;top:306px;width:45px;">Confirmed</div>
<div class="t cell" style="left:284px;top:306px;width:98px;"><span style="letter-spacing:0.15px">6/16/2016 11:00</span></div>
<div class="t cell" style="left:384px;top:306px;width:98px;"><span style="letter-spacing:0.1px">6/21/2016 08:00</span></div>
<div class="t cell" style="left:484px;top:306px;width:115px;"><span style="letter-spacing:-0.12px">Fox Corporation</span></div>
<div class="t cell" style="left:601px;top:306px;width:61px;"><span style="letter-spacing:-0.88px">FOX</span></div>
<svg style="position:absolute;left:672px;top:307px" width="16" height="14" viewBox="0 0 16 14">
<path d="M0.5 0.5 H12.5 L15.5 3.5 V12.5 H0.5 Z" fill="url(#ng)" stroke="#c6c6c6" stroke-width="1"/>
<path d="M12.5 0.5 L15.5 3.5 H12.5 Z" fill="#bcbcbc" stroke="#c6c6c6" stroke-width="1" stroke-linejoin="round"/>
<text x="7.8" y="10.2" text-anchor="middle" font-family="Liberation Sans" font-style="italic" font-size="10.5" fill="#8e8e8e">a</text>
</svg>
<div class="t cell r" style="left:699px;top:306px;width:71px;"><span style="letter-spacing:-0.11px">$0.00</span></div>
<div class="t cell r" style="left:774px;top:306px;width:71px;"><span style="letter-spacing:-0.11px">$0.00</span></div>
<div class="t cell r" style="left:849px;top:306px;width:71px;"><span style="letter-spacing:-0.11px">$38,870.16</span></div>
<div class="t cell r" style="left:924px;top:306px;width:71px;"><span style="letter-spacing:-0.11px">$44,070.16</span></div>
<div class="t cell" style="left:999px;top:306px;width:74px;text-align:center"><span style="letter-spacing:0.05px">Fully Invoiced</span></div>
<div style="left:1086px;top:308px;width:11px;height:11px;border:1px solid #8f8f8f;box-sizing:border-box;background:#fff"></div>
<div style="left:6px;top:322px;width:12px;height:100px;background:#000"></div>
<div style="left:7px;top:323px;width:10px;height:98px;background:#fff"></div>
<div style="left:8px;top:324px;width:9px;height:97px;background:#f0f0f0"></div>
<div style="left:35px;top:322px;width:16px;height:1px;background:#fff"></div>
<div style="left:51px;top:322px;width:1px;height:25px;background:#a0a0a0"></div>
<div style="left:51px;top:322px;width:1060px;height:1px;background:#a0a0a0"></div>
<div style="left:52px;top:344px;width:5px;height:1px;background:#000"></div>
<div style="left:57px;top:325px;width:51px;height:21px;background:#000"></div>
<div style="left:58px;top:326px;width:49px;height:20px;background:#efefef"></div>
<div style="left:108px;top:344px;width:1003px;height:1px;background:#000"></div>
<div class="t cell" style="left:62px;top:328px;line-height:17px"><span style="letter-spacing:-0.04px">Invoices</span></div>
<div class="t cell" style="left:111px;top:328px;line-height:17px"><span style="letter-spacing:-0.21px">Purchase Orders</span></div>
<div style="left:52px;top:347px;width:1059px;height:75px;background:#000"></div>
<div style="left:53px;top:348px;width:1057px;height:73px;background:#fff"></div>
<div style="left:53px;top:348px;width:575px;height:19px;background:#000"></div>
<div style="left:54px;top:349px;width:573px;height:17px;background:#24508f"></div>
<div style="left:53px;top:367px;width:1px;height:54px;background:#000"></div>
<div style="left:152px;top:349px;width:1px;height:17px;background:#000"></div>
<div style="left:377px;top:349px;width:1px;height:17px;background:#000"></div>
<div style="left:493px;top:349px;width:1px;height:17px;background:#000"></div>
<div class="t hds" style="left:56px;top:350px;"><span style="letter-spacing:-0.09px">Invoice No.</span></div>
<div class="t hds" style="left:154px;top:350px;"><span style="letter-spacing:-0.19px">Client</span></div>
<div class="t hds" style="left:379px;top:350px;"><span style="letter-spacing:0.31px">Totalex</span></div>
<div class="t hds" style="left:495px;top:350px;"><span style="letter-spacing:0.12px">Inv_Date</span></div>
<div style="left:54px;top:384px;width:573px;height:1px;background:#a0a0a0"></div>
<div style="left:152px;top:367px;width:1px;height:18px;background:#a0a0a0"></div>
<div style="left:377px;top:367px;width:1px;height:18px;background:#a0a0a0"></div>
<div style="left:493px;top:367px;width:1px;height:18px;background:#a0a0a0"></div>
<div style="left:627px;top:367px;width:1px;height:18px;background:#a0a0a0"></div>
<div class="t cell" style="left:54px;top:368px;"><span style="letter-spacing:-0.28px">INV223</span></div>
<div class="t cell" style="left:154px;top:368px;"><span style="letter-spacing:-0.12px">Fox Corporation</span></div>
<div class="t cell r" style="left:378px;top:368px;width:112px;"><span style="letter-spacing:-0.11px">$32,600.16</span></div>
<div class="t cell" style="left:495px;top:368px;"><span style="letter-spacing:0.21px">1/18/2011</span></div>
<div style="left:54px;top:402px;width:573px;height:1px;background:#a0a0a0"></div>
<div style="left:152px;top:385px;width:1px;height:18px;background:#a0a0a0"></div>
<div style="left:377px;top:385px;width:1px;height:18px;background:#a0a0a0"></div>
<div style="left:493px;top:385px;width:1px;height:18px;background:#a0a0a0"></div>
<div style="left:627px;top:385px;width:1px;height:18px;background:#a0a0a0"></div>
<div class="t cell" style="left:54px;top:386px;"><span style="letter-spacing:-0.28px">INV225</span></div>
<div class="t cell" style="left:154px;top:386px;"><span style="letter-spacing:-0.12px">Fox Corporation</span></div>
<div class="t cell r" style="left:378px;top:386px;width:112px;"><span style="letter-spacing:-0.1px">$9,450.00</span></div>
<div class="t cell" style="left:495px;top:386px;"><span style="letter-spacing:0.21px">1/18/2011</span></div>
<div style="left:152px;top:403px;width:1px;height:18px;background:#a0a0a0"></div>
<div style="left:377px;top:403px;width:1px;height:18px;background:#a0a0a0"></div>
<div style="left:493px;top:403px;width:1px;height:18px;background:#a0a0a0"></div>
<div style="left:627px;top:403px;width:1px;height:18px;background:#a0a0a0"></div>
<div class="t cell" style="left:54px;top:404px;"><span style="letter-spacing:-0.28px">INV226</span></div>
<div class="t cell" style="left:154px;top:404px;"><span style="letter-spacing:-0.12px">Fox Corporation</span></div>
<div class="t cell r" style="left:378px;top:404px;width:112px;"><span style="letter-spacing:-0.1px">$1,020.00</span></div>
<div class="t cell" style="left:495px;top:404px;"><span style="letter-spacing:0.21px">1/18/2011</span></div>
<div style="left:52px;top:421px;width:1059px;height:1px;background:#000"></div>
<div style="left:35px;top:421px;width:17px;height:1px;background:#a0a0a0"></div>
<div style="left:6px;top:421px;width:12px;height:19px;background:#000"></div>
<div style="left:7px;top:422px;width:10px;height:17px;background:#fff"></div>
<div style="left:8px;top:423px;width:9px;height:16px;background:#f0f0f0"></div>
<div style="left:35px;top:439px;width:1075px;height:1px;background:#a0a0a0"></div>
<div style="left:89px;top:422px;width:1px;height:17px;background:#a0a0a0"></div>
<div style="left:235px;top:422px;width:1px;height:17px;background:#a0a0a0"></div>
<div style="left:282px;top:422px;width:1px;height:17px;background:#a0a0a0"></div>
<div style="left:382px;top:422px;width:1px;height:17px;background:#a0a0a0"></div>
<div style="left:482px;top:422px;width:1px;height:17px;background:#a0a0a0"></div>
<div style="left:599px;top:422px;width:1px;height:17px;background:#a0a0a0"></div>
<div style="left:662px;top:422px;width:1px;height:17px;background:#a0a0a0"></div>
<div style="left:698px;top:422px;width:1px;height:17px;background:#a0a0a0"></div>
<div style="left:773px;top:422px;width:1px;height:17px;background:#a0a0a0"></div>
<div style="left:848px;top:422px;width:1px;height:17px;background:#a0a0a0"></div>
<div style="left:923px;top:422px;width:1px;height:17px;background:#a0a0a0"></div>
<div style="left:998px;top:422px;width:1px;height:17px;background:#a0a0a0"></div>
<div style="left:1073px;top:422px;width:1px;height:17px;background:#a0a0a0"></div>
<div class="t cell" style="left:53px;top:423px;width:36px;"><span style="letter-spacing:-0.21px">J275</span></div>
<div class="t cell" style="left:91px;top:423px;width:144px;"><span style="letter-spacing:-0.17px">Yamaha Special Event</span></div>
<div class="t cell" style="left:237px;top:423px;width:45px;"><span style="letter-spacing:-0.16px">Active</span></div>
<div class="t cell" style="left:284px;top:423px;width:98px;"><span style="letter-spacing:0.1px">5/19/2016 08:00</span></div>
<div class="t cell" style="left:384px;top:423px;width:98px;"><span style="letter-spacing:0.1px">5/30/2016 08:00</span></div>
<div class="t cell" style="left:484px;top:423px;width:115px;"><span style="letter-spacing:-0.12px">Fox Corporation</span></div>
<div class="t cell" style="left:601px;top:423px;width:61px;"><span style="letter-spacing:-0.88px">FOX</span></div>
<svg style="position:absolute;left:672px;top:424px" width="16" height="14" viewBox="0 0 16 14">
<path d="M0.5 0.5 H12.5 L15.5 3.5 V12.5 H0.5 Z" fill="url(#ng)" stroke="#c6c6c6" stroke-width="1"/>
<path d="M12.5 0.5 L15.5 3.5 H12.5 Z" fill="#bcbcbc" stroke="#c6c6c6" stroke-width="1" stroke-linejoin="round"/>
<text x="7.8" y="10.2" text-anchor="middle" font-family="Liberation Sans" font-style="italic" font-size="10.5" fill="#8e8e8e">a</text>
</svg>
<div class="t cell r" style="left:699px;top:423px;width:71px;"><span style="letter-spacing:-0.11px">$0.00</span></div>
<div class="t cell r" style="left:774px;top:423px;width:71px;"><span style="letter-spacing:-0.11px">$0.00</span></div>
<div class="t cell r" style="left:849px;top:423px;width:71px;"><span style="letter-spacing:-0.11px">$13,360.00</span></div>
<div class="t cell r" style="left:924px;top:423px;width:71px;"><span style="letter-spacing:-0.11px">$0.00</span></div>
<div class="t cell" style="left:1000px;top:423px;width:72px;"><span style="letter-spacing:-0.06px">Nothing Invoiced</span></div>
<div style="left:1086px;top:425px;width:11px;height:11px;border:1px solid #8f8f8f;box-sizing:border-box;background:#fff"></div>
<div style="left:6px;top:439px;width:12px;height:19px;background:#000"></div>
<div style="left:7px;top:440px;width:10px;height:17px;background:#fff"></div>
<div style="left:8px;top:441px;width:9px;height:16px;background:#f0f0f0"></div>
<div style="left:35px;top:457px;width:1075px;height:1px;background:#a0a0a0"></div>
<div style="left:89px;top:440px;width:1px;height:17px;background:#a0a0a0"></div>
<div style="left:235px;top:440px;width:1px;height:17px;background:#a0a0a0"></div>
<div style="left:282px;top:440px;width:1px;height:17px;background:#a0a0a0"></div>
<div style="left:382px;top:440px;width:1px;height:17px;background:#a0a0a0"></div>
<div style="left:482px;top:440px;width:1px;height:17px;background:#a0a0a0"></div>
<div style="left:599px;top:440px;width:1px;height:17px;background:#a0a0a0"></div>
<div style="left:662px;top:440px;width:1px;height:17px;background:#a0a0a0"></div>
<div style="left:698px;top:440px;width:1px;height:17px;background:#a0a0a0"></div>
<div style="left:773px;top:440px;width:1px;height:17px;background:#a0a0a0"></div>
<div style="left:848px;top:440px;width:1px;height:17px;background:#a0a0a0"></div>
<div style="left:923px;top:440px;width:1px;height:17px;background:#a0a0a0"></div>
<div style="left:998px;top:440px;width:1px;height:17px;background:#a0a0a0"></div>
<div style="left:1073px;top:440px;width:1px;height:17px;background:#a0a0a0"></div>
<div style="left:38px;top:443px;width:11px;height:11px;border:1px solid #a0a0a0;box-sizing:border-box;background:#f0f0f0;box-shadow:inset 1px 1px 0 #fff"></div>
<div style="left:41px;top:448px;width:5px;height:1px;background:#000"></div>
<div style="left:43px;top:446px;width:1px;height:5px;background:#000"></div>
<div class="t cell" style="left:53px;top:441px;width:36px;"><span style="letter-spacing:-0.21px">J233</span></div>
<div class="t cell" style="left:91px;top:441px;width:144px;"><span style="letter-spacing:-0.3px">Phillips TV Job</span></div>
<div class="t cell" style="left:237px;top:441px;width:45px;">Confirmed</div>
<div class="t cell" style="left:284px;top:441px;width:98px;"><span style="letter-spacing:0.1px">5/15/2016 08:00</span></div>
<div class="t cell" style="left:384px;top:441px;width:98px;"><span style="letter-spacing:0.1px">5/25/2016 14:00</span></div>
<div class="t cell" style="left:484px;top:441px;width:115px;"><span style="letter-spacing:-0.08px">Westsun</span></div>
<div class="t cell" style="left:601px;top:441px;width:61px;"></div>
<svg style="position:absolute;left:672px;top:442px" width="16" height="14" viewBox="0 0 16 14">
<path d="M0.5 0.5 H12.5 L15.5 3.5 V12.5 H0.5 Z" fill="url(#ng)" stroke="#c6c6c6" stroke-width="1"/>
<path d="M12.5 0.5 L15.5 3.5 H12.5 Z" fill="#bcbcbc" stroke="#c6c6c6" stroke-width="1" stroke-linejoin="round"/>
<text x="7.8" y="10.2" text-anchor="middle" font-family="Liberation Sans" font-style="italic" font-size="10.5" fill="#8e8e8e">a</text>
</svg>
<div class="t cell r" style="left:699px;top:441px;width:71px;"><span style="letter-spacing:-0.11px">$0.00</span></div>
<div class="t cell r" style="left:774px;top:441px;width:71px;"><span style="letter-spacing:-0.11px">$0.00</span></div>
<div class="t cell r" style="left:849px;top:441px;width:71px;"><span style="letter-spacing:-0.1px">$4,050.00</span></div>
<div class="t cell r" style="left:924px;top:441px;width:71px;"><span style="letter-spacing:-0.1px">$1,800.00</span></div>
<div class="t cell" style="left:1000px;top:441px;width:72px;"><span style="letter-spacing:0.05px">Partially Invoiced</span></div>
<div style="left:1086px;top:443px;width:11px;height:11px;border:1px solid #8f8f8f;box-sizing:border-box;background:#fff"></div>
<div style="left:6px;top:457px;width:12px;height:19px;background:#000"></div>
<div style="left:7px;top:458px;width:10px;height:17px;background:#fff"></div>
<div style="left:8px;top:459px;width:9px;height:16px;background:#f0f0f0"></div>
<div style="left:35px;top:475px;width:1075px;height:1px;background:#a0a0a0"></div>
<div style="left:89px;top:458px;width:1px;height:17px;background:#a0a0a0"></div>
<div style="left:235px;top:458px;width:1px;height:17px;background:#a0a0a0"></div>
<div style="left:282px;top:458px;width:1px;height:17px;background:#a0a0a0"></div>
<div style="left:382px;top:458px;width:1px;height:17px;background:#a0a0a0"></div>
<div style="left:482px;top:458px;width:1px;height:17px;background:#a0a0a0"></div>
<div style="left:599px;top:458px;width:1px;height:17px;background:#a0a0a0"></div>
<div style="left:662px;top:458px;width:1px;height:17px;background:#a0a0a0"></div>
<div style="left:698px;top:458px;width:1px;height:17px;background:#a0a0a0"></div>
<div style="left:773px;top:458px;width:1px;height:17px;background:#a0a0a0"></div>
<div style="left:848px;top:458px;width:1px;height:17px;background:#a0a0a0"></div>
<div style="left:923px;top:458px;width:1px;height:17px;background:#a0a0a0"></div>
<div style="left:998px;top:458px;width:1px;height:17px;background:#a0a0a0"></div>
<div style="left:1073px;top:458px;width:1px;height:17px;background:#a0a0a0"></div>
<div class="t cell" style="left:53px;top:459px;width:36px;"><span style="letter-spacing:-0.21px">J225</span></div>
<div class="t cell" style="left:91px;top:459px;width:144px;"><span style="letter-spacing:-0.06px">Hyatt Hotels General Manager</span></div>
<div class="t cell" style="left:237px;top:459px;width:45px;"><span style="letter-spacing:-0.19px">Quote</span></div>
<div class="t cell" style="left:284px;top:459px;width:98px;"><span style="letter-spacing:0.1px">5/14/2016 08:00</span></div>
<div class="t cell" style="left:384px;top:459px;width:98px;"><span style="letter-spacing:0.1px">5/25/2016 08:00</span></div>
<div class="t cell" style="left:484px;top:459px;width:115px;"><span style="letter-spacing:0.01px">Hyatt Tech Center</span></div>
<div class="t cell" style="left:601px;top:459px;width:61px;"></div>
<svg style="position:absolute;left:672px;top:460px" width="16" height="14" viewBox="0 0 16 14">
<path d="M0.5 0.5 H12.5 L15.5 3.5 V12.5 H0.5 Z" fill="url(#ng)" stroke="#c6c6c6" stroke-width="1"/>
<path d="M12.5 0.5 L15.5 3.5 H12.5 Z" fill="#bcbcbc" stroke="#c6c6c6" stroke-width="1" stroke-linejoin="round"/>
<text x="7.8" y="10.2" text-anchor="middle" font-family="Liberation Sans" font-style="italic" font-size="10.5" fill="#8e8e8e">a</text>
</svg>
<div class="t cell r" style="left:699px;top:459px;width:71px;"><span style="letter-spacing:-0.11px">$369.00</span></div>
<div class="t cell r" style="left:774px;top:459px;width:71px;"><span style="letter-spacing:-0.11px">$0.00</span></div>
<div class="t cell r" style="left:849px;top:459px;width:71px;"><span style="letter-spacing:-0.11px">$0.00</span></div>
<div class="t cell r" style="left:924px;top:459px;width:71px;"><span style="letter-spacing:-0.11px">$0.00</span></div>
<div class="t cell" style="left:1000px;top:459px;width:72px;"><span style="letter-spacing:-0.02px">Nothing To Invoice</span></div>
<div style="left:1086px;top:461px;width:11px;height:11px;border:1px solid #8f8f8f;box-sizing:border-box;background:#fff"></div>
<div style="left:6px;top:475px;width:12px;height:19px;background:#000"></div>
<div style="left:7px;top:476px;width:10px;height:17px;background:#fff"></div>
<div style="left:8px;top:477px;width:9px;height:16px;background:#f0f0f0"></div>
<div style="left:35px;top:493px;width:1075px;height:1px;background:#a0a0a0"></div>
<div style="left:89px;top:476px;width:1px;height:17px;background:#a0a0a0"></div>
<div style="left:235px;top:476px;width:1px;height:17px;background:#a0a0a0"></div>
<div style="left:282px;top:476px;width:1px;height:17px;background:#a0a0a0"></div>
<div style="left:382px;top:476px;width:1px;height:17px;background:#a0a0a0"></div>
<div style="left:482px;top:476px;width:1px;height:17px;background:#a0a0a0"></div>
<div style="left:599px;top:476px;width:1px;height:17px;background:#a0a0a0"></div>
<div style="left:662px;top:476px;width:1px;height:17px;background:#a0a0a0"></div>
<div style="left:698px;top:476px;width:1px;height:17px;background:#a0a0a0"></div>
<div style="left:773px;top:476px;width:1px;height:17px;background:#a0a0a0"></div>
<div style="left:848px;top:476px;width:1px;height:17px;background:#a0a0a0"></div>
<div style="left:923px;top:476px;width:1px;height:17px;background:#a0a0a0"></div>
<div style="left:998px;top:476px;width:1px;height:17px;background:#a0a0a0"></div>
<div style="left:1073px;top:476px;width:1px;height:17px;background:#a0a0a0"></div>
<div class="t cell" style="left:53px;top:477px;width:36px;"><span style="letter-spacing:-0.21px">J276</span></div>
<div class="t cell" style="left:91px;top:477px;width:144px;"><span style="letter-spacing:-0.23px">Land Rover Show</span></div>
<div class="t cell" style="left:237px;top:477px;width:45px;"><span style="letter-spacing:-0.16px">Active</span></div>
<div class="t cell" style="left:284px;top:477px;width:98px;"><span style="letter-spacing:0.1px">5/10/2016 08:00</span></div>
<div class="t cell" style="left:384px;top:477px;width:98px;"><span style="letter-spacing:0.1px">5/21/2016 08:00</span></div>
<div class="t cell" style="left:484px;top:477px;width:115px;"><span style="letter-spacing:-0.12px">Fox Corporation</span></div>
<div class="t cell" style="left:601px;top:477px;width:61px;"><span style="letter-spacing:-0.88px">FOX</span></div>
<svg style="position:absolute;left:672px;top:478px" width="16" height="14" viewBox="0 0 16 14">
<path d="M0.5 0.5 H12.5 L15.5 3.5 V12.5 H0.5 Z" fill="url(#ng)" stroke="#c6c6c6" stroke-width="1"/>
<path d="M12.5 0.5 L15.5 3.5 H12.5 Z" fill="#bcbcbc" stroke="#c6c6c6" stroke-width="1" stroke-linejoin="round"/>
<text x="7.8" y="10.2" text-anchor="middle" font-family="Liberation Sans" font-style="italic" font-size="10.5" fill="#8e8e8e">a</text>
</svg>
<div class="t cell r" style="left:699px;top:477px;width:71px;"><span style="letter-spacing:-0.11px">$0.00</span></div>
<div class="t cell r" style="left:774px;top:477px;width:71px;"><span style="letter-spacing:-0.11px">$0.00</span></div>
<div class="t cell r" style="left:849px;top:477px;width:71px;"><span style="letter-spacing:-0.03px">$11,500.00</span></div>
<div class="t cell r" style="left:924px;top:477px;width:71px;"><span style="letter-spacing:-0.11px">$0.00</span></div>
<div class="t cell" style="left:1000px;top:477px;width:72px;"><span style="letter-spacing:-0.06px">Nothing Invoiced</span></div>
<div style="left:1086px;top:479px;width:11px;height:11px;border:1px solid #8f8f8f;box-sizing:border-box;background:#fff"></div>
<div style="left:6px;top:493px;width:12px;height:19px;background:#000"></div>
<div style="left:7px;top:494px;width:10px;height:17px;background:#fff"></div>
<div style="left:8px;top:495px;width:9px;height:16px;background:#f0f0f0"></div>
<div style="left:35px;top:511px;width:1075px;height:1px;background:#a0a0a0"></div>
<div style="left:89px;top:494px;width:1px;height:17px;background:#a0a0a0"></div>
<div style="left:235px;top:494px;width:1px;height:17px;background:#a0a0a0"></div>
<div style="left:282px;top:494px;width:1px;height:17px;background:#a0a0a0"></div>
<div style="left:382px;top:494px;width:1px;height:17px;background:#a0a0a0"></div>
<div style="left:482px;top:494px;width:1px;height:17px;background:#a0a0a0"></div>
<div style="left:599px;top:494px;width:1px;height:17px;background:#a0a0a0"></div>
<div style="left:662px;top:494px;width:1px;height:17px;background:#a0a0a0"></div>
<div style="left:698px;top:494px;width:1px;height:17px;background:#a0a0a0"></div>
<div style="left:773px;top:494px;width:1px;height:17px;background:#a0a0a0"></div>
<div style="left:848px;top:494px;width:1px;height:17px;background:#a0a0a0"></div>
<div style="left:923px;top:494px;width:1px;height:17px;background:#a0a0a0"></div>
<div style="left:998px;top:494px;width:1px;height:17px;background:#a0a0a0"></div>
<div style="left:1073px;top:494px;width:1px;height:17px;background:#a0a0a0"></div>
<div style="left:38px;top:497px;width:11px;height:11px;border:1px solid #a0a0a0;box-sizing:border-box;background:#f0f0f0;box-shadow:inset 1px 1px 0 #fff"></div>
<div style="left:41px;top:502px;width:5px;height:1px;background:#000"></div>
<div style="left:43px;top:500px;width:1px;height:5px;background:#000"></div>
<div class="t cell" style="left:53px;top:495px;width:36px;"><span style="letter-spacing:-0.21px">J266</span></div>
<div class="t cell" style="left:91px;top:495px;width:144px;">MetalWorks Event</div>
<div class="t cell" style="left:237px;top:495px;width:45px;"><span style="letter-spacing:-0.16px">Active</span></div>
<div class="t cell" style="left:284px;top:495px;width:98px;"><span style="letter-spacing:0.11px">5/6/2016 08:00</span></div>
<div class="t cell" style="left:384px;top:495px;width:98px;"><span style="letter-spacing:0.1px">5/16/2016 14:00</span></div>
<div class="t cell" style="left:484px;top:495px;width:115px;"><span style="letter-spacing:-0.22px">On Stage Audio</span></div>
<div class="t cell" style="left:601px;top:495px;width:61px;"><span style="letter-spacing:-1.08px">OSA</span></div>
<svg style="position:absolute;left:672px;top:496px" width="16" height="14" viewBox="0 0 16 14">
<path d="M0.5 0.5 H12.5 L15.5 3.5 V12.5 H0.5 Z" fill="url(#ng)" stroke="#c6c6c6" stroke-width="1"/>
<path d="M12.5 0.5 L15.5 3.5 H12.5 Z" fill="#bcbcbc" stroke="#c6c6c6" stroke-width="1" stroke-linejoin="round"/>
<text x="7.8" y="10.2" text-anchor="middle" font-family="Liberation Sans" font-style="italic" font-size="10.5" fill="#8e8e8e">a</text>
</svg>
<div class="t cell r" style="left:699px;top:495px;width:71px;"><span style="letter-spacing:-0.11px">$0.00</span></div>
<div class="t cell r" style="left:774px;top:495px;width:71px;"><span style="letter-spacing:-0.11px">$0.00</span></div>
<div class="t cell r" style="left:849px;top:495px;width:71px;"><span style="letter-spacing:-0.11px">$18,332.64</span></div>
<div class="t cell r" style="left:924px;top:495px;width:71px;"><span style="letter-spacing:-0.11px">$0.00</span></div>
<div class="t cell" style="left:1000px;top:495px;width:72px;"><span style="letter-spacing:-0.06px">Nothing Invoiced</span></div>
<div style="left:1086px;top:497px;width:11px;height:11px;border:1px solid #8f8f8f;box-sizing:border-box;background:#fff"></div>
<div style="left:6px;top:511px;width:12px;height:19px;background:#000"></div>
<div style="left:7px;top:512px;width:10px;height:17px;background:#fff"></div>
<div style="left:8px;top:513px;width:9px;height:16px;background:#f0f0f0"></div>
<div style="left:35px;top:529px;width:1075px;height:1px;background:#a0a0a0"></div>
<div style="left:89px;top:512px;width:1px;height:17px;background:#a0a0a0"></div>
<div style="left:235px;top:512px;width:1px;height:17px;background:#a0a0a0"></div>
<div style="left:282px;top:512px;width:1px;height:17px;background:#a0a0a0"></div>
<div style="left:382px;top:512px;width:1px;height:17px;background:#a0a0a0"></div>
<div style="left:482px;top:512px;width:1px;height:17px;background:#a0a0a0"></div>
<div style="left:599px;top:512px;width:1px;height:17px;background:#a0a0a0"></div>
<div style="left:662px;top:512px;width:1px;height:17px;background:#a0a0a0"></div>
<div style="left:698px;top:512px;width:1px;height:17px;background:#a0a0a0"></div>
<div style="left:773px;top:512px;width:1px;height:17px;background:#a0a0a0"></div>
<div style="left:848px;top:512px;width:1px;height:17px;background:#a0a0a0"></div>
<div style="left:923px;top:512px;width:1px;height:17px;background:#a0a0a0"></div>
<div style="left:998px;top:512px;width:1px;height:17px;background:#a0a0a0"></div>
<div style="left:1073px;top:512px;width:1px;height:17px;background:#a0a0a0"></div>
<div class="t cell" style="left:53px;top:513px;width:36px;"><span style="letter-spacing:-0.21px">J226</span></div>
<div class="t cell" style="left:91px;top:513px;width:144px;"><span style="letter-spacing:-0.26px">Starbucks TV Show</span></div>
<div class="t cell" style="left:237px;top:513px;width:45px;"><span style="letter-spacing:-0.19px">Quote</span></div>
<div class="t cell" style="left:284px;top:513px;width:98px;"><span style="letter-spacing:0.17px">5/5/2016 11:00</span></div>
<div class="t cell" style="left:384px;top:513px;width:98px;"><span style="letter-spacing:0.15px">5/10/2016 11:00</span></div>
<div class="t cell" style="left:484px;top:513px;width:115px;"><span style="letter-spacing:-0.12px">Fox Corporation</span></div>
<div class="t cell" style="left:601px;top:513px;width:61px;"><span style="letter-spacing:-0.88px">FOX</span></div>
<svg style="position:absolute;left:672px;top:514px" width="16" height="14" viewBox="0 0 16 14">
<path d="M0.5 0.5 H12.5 L15.5 3.5 V12.5 H0.5 Z" fill="url(#nb)" stroke="#3a8ef2" stroke-width="1"/>
<path d="M12 0 L16 4 H12 Z" fill="#3a8ef2"/>
<text x="7.6" y="10.8" text-anchor="middle" font-family="Liberation Serif" font-style="italic" font-weight="bold" font-size="11.5" fill="#1c4c98">A</text>
</svg>
<div class="t cell r" style="left:699px;top:513px;width:71px;"><span style="letter-spacing:-0.11px">$0.00</span></div>
<div class="t cell r" style="left:774px;top:513px;width:71px;"><span style="letter-spacing:-0.11px">$0.00</span></div>
<div class="t cell r" style="left:849px;top:513px;width:71px;"><span style="letter-spacing:-0.11px">$34,769.33</span></div>
<div class="t cell r" style="left:924px;top:513px;width:71px;"><span style="letter-spacing:-0.11px">$0.00</span></div>
<div class="t cell" style="left:1000px;top:513px;width:72px;"><span style="letter-spacing:-0.06px">Nothing Invoiced</span></div>
<div style="left:1086px;top:515px;width:11px;height:11px;border:1px solid #8f8f8f;box-sizing:border-box;background:#fff"></div>
<div style="left:6px;top:529px;width:12px;height:19px;background:#000"></div>
<div style="left:7px;top:530px;width:10px;height:17px;background:#fff"></div>
<div style="left:8px;top:531px;width:9px;height:16px;background:#f0f0f0"></div>
<div style="left:35px;top:547px;width:1075px;height:1px;background:#a0a0a0"></div>
<div style="left:89px;top:530px;width:1px;height:17px;background:#a0a0a0"></div>
<div style="left:235px;top:530px;width:1px;height:17px;background:#a0a0a0"></div>
<div style="left:282px;top:530px;width:1px;height:17px;background:#a0a0a0"></div>
<div style="left:382px;top:530px;width:1px;height:17px;background:#a0a0a0"></div>
<div style="left:482px;top:530px;width:1px;height:17px;background:#a0a0a0"></div>
<div style="left:599px;top:530px;width:1px;height:17px;background:#a0a0a0"></div>
<div style="left:662px;top:530px;width:1px;height:17px;background:#a0a0a0"></div>
<div style="left:698px;top:530px;width:1px;height:17px;background:#a0a0a0"></div>
<div style="left:773px;top:530px;width:1px;height:17px;background:#a0a0a0"></div>
<div style="left:848px;top:530px;width:1px;height:17px;background:#a0a0a0"></div>
<div style="left:923px;top:530px;width:1px;height:17px;background:#a0a0a0"></div>
<div style="left:998px;top:530px;width:1px;height:17px;background:#a0a0a0"></div>
<div style="left:1073px;top:530px;width:1px;height:17px;background:#a0a0a0"></div>
<div style="left:38px;top:533px;width:11px;height:11px;border:1px solid #a0a0a0;box-sizing:border-box;background:#f0f0f0;box-shadow:inset 1px 1px 0 #fff"></div>
<div style="left:41px;top:538px;width:5px;height:1px;background:#000"></div>
<div style="left:43px;top:536px;width:1px;height:5px;background:#000"></div>
<div class="t cell" style="left:53px;top:531px;width:36px;"><span style="letter-spacing:-0.21px">J261</span></div>
<div class="t cell" style="left:91px;top:531px;width:144px;"><span style="letter-spacing:-0.16px">Taco Bell Show</span></div>
<div class="t cell" style="left:237px;top:531px;width:45px;"><span style="letter-spacing:-0.16px">Active</span></div>
<div class="t cell" style="left:284px;top:531px;width:98px;"><span style="letter-spacing:0.11px">5/5/2016 08:00</span></div>
<div class="t cell" style="left:384px;top:531px;width:98px;"><span style="letter-spacing:0.1px">5/10/2016 08:00</span></div>
<div class="t cell" style="left:484px;top:531px;width:115px;"><span style="letter-spacing:-0.12px">Fox Corporation</span></div>
<div class="t cell" style="left:601px;top:531px;width:61px;"><span style="letter-spacing:-0.88px">FOX</span></div>
<svg style="position:absolute;left:672px;top:532px" width="16" height="14" viewBox="0 0 16 14">
<path d="M0.5 0.5 H12.5 L15.5 3.5 V12.5 H0.5 Z" fill="url(#ng)" stroke="#c6c6c6" stroke-width="1"/>
<path d="M12.5 0.5 L15.5 3.5 H12.5 Z" fill="#bcbcbc" stroke="#c6c6c6" stroke-width="1" stroke-linejoin="round"/>
<text x="7.8" y="10.2" text-anchor="middle" font-family="Liberation Sans" font-style="italic" font-size="10.5" fill="#8e8e8e">a</text>
</svg>
<div class="t cell r" style="left:699px;top:531px;width:71px;"><span style="letter-spacing:-0.11px">$0.00</span></div>
<div class="t cell r" style="left:774px;top:531px;width:71px;"><span style="letter-spacing:-0.11px">$0.00</span></div>
<div class="t cell r" style="left:849px;top:531px;width:71px;"><span style="letter-spacing:-0.11px">$18,040.02</span></div>
<div class="t cell r" style="left:924px;top:531px;width:71px;"><span style="letter-spacing:-0.1px">$3,300.00</span></div>
<div class="t cell" style="left:1000px;top:531px;width:72px;"><span style="letter-spacing:0.05px">Partially Invoiced</span></div>
<div style="left:1086px;top:533px;width:11px;height:11px;border:1px solid #8f8f8f;box-sizing:border-box;background:#fff"></div>
<div style="left:6px;top:547px;width:12px;height:19px;background:#000"></div>
<div style="left:7px;top:548px;width:10px;height:17px;background:#fff"></div>
<div style="left:8px;top:549px;width:9px;height:16px;background:#f0f0f0"></div>
<div style="left:35px;top:565px;width:1075px;height:1px;background:#a0a0a0"></div>
<div style="left:89px;top:548px;width:1px;height:17px;background:#a0a0a0"></div>
<div style="left:235px;top:548px;width:1px;height:17px;background:#a0a0a0"></div>
<div style="left:282px;top:548px;width:1px;height:17px;background:#a0a0a0"></div>
<div style="left:382px;top:548px;width:1px;height:17px;background:#a0a0a0"></div>
<div style="left:482px;top:548px;width:1px;height:17px;background:#a0a0a0"></div>
<div style="left:599px;top:548px;width:1px;height:17px;background:#a0a0a0"></div>
<div style="left:662px;top:548px;width:1px;height:17px;background:#a0a0a0"></div>
<div style="left:698px;top:548px;width:1px;height:17px;background:#a0a0a0"></div>
<div style="left:773px;top:548px;width:1px;height:17px;background:#a0a0a0"></div>
<div style="left:848px;top:548px;width:1px;height:17px;background:#a0a0a0"></div>
<div style="left:923px;top:548px;width:1px;height:17px;background:#a0a0a0"></div>
<div style="left:998px;top:548px;width:1px;height:17px;background:#a0a0a0"></div>
<div style="left:1073px;top:548px;width:1px;height:17px;background:#a0a0a0"></div>
<div class="t cell" style="left:53px;top:549px;width:36px;"><span style="letter-spacing:-0.21px">J227</span></div>
<div class="t cell" style="left:91px;top:549px;width:144px;"><span style="letter-spacing:-0.09px">Joel Osteen - Boston</span></div>
<div class="t cell" style="left:237px;top:549px;width:45px;"><span style="letter-spacing:-0.19px">Quote</span></div>
<div class="t cell" style="left:284px;top:549px;width:98px;"><span style="letter-spacing:0.15px">4/27/2016 11:00</span></div>
<div class="t cell" style="left:384px;top:549px;width:98px;"><span style="letter-spacing:0.11px">5/7/2016 14:00</span></div>
<div class="t cell" style="left:484px;top:549px;width:115px;"><span style="letter-spacing:-0.12px">Fox Corporation</span></div>
<div class="t cell" style="left:601px;top:549px;width:61px;"><span style="letter-spacing:-0.88px">FOX</span></div>
<svg style="position:absolute;left:672px;top:550px" width="16" height="14" viewBox="0 0 16 14">
<path d="M0.5 0.5 H12.5 L15.5 3.5 V12.5 H0.5 Z" fill="url(#ng)" stroke="#c6c6c6" stroke-width="1"/>
<path d="M12.5 0.5 L15.5 3.5 H12.5 Z" fill="#bcbcbc" stroke="#c6c6c6" stroke-width="1" stroke-linejoin="round"/>
<text x="7.8" y="10.2" text-anchor="middle" font-family="Liberation Sans" font-style="italic" font-size="10.5" fill="#8e8e8e">a</text>
</svg>
<div class="t cell r" style="left:699px;top:549px;width:71px;"><span style="letter-spacing:-0.1px">$3,800.00</span></div>
<div class="t cell r" style="left:774px;top:549px;width:71px;"><span style="letter-spacing:-0.11px">$0.00</span></div>
<div class="t cell r" style="left:849px;top:549px;width:71px;"><span style="letter-spacing:-0.11px">$0.00</span></div>
<div class="t cell r" style="left:924px;top:549px;width:71px;"><span style="letter-spacing:-0.11px">$0.00</span></div>
<div class="t cell" style="left:1000px;top:549px;width:72px;"><span style="letter-spacing:-0.02px">Nothing To Invoice</span></div>
<div style="left:1086px;top:551px;width:11px;height:11px;border:1px solid #8f8f8f;box-sizing:border-box;background:#fff"></div>
<div style="left:6px;top:565px;width:12px;height:19px;background:#000"></div>
<div style="left:7px;top:566px;width:10px;height:17px;background:#fff"></div>
<div style="left:8px;top:567px;width:9px;height:16px;background:#f0f0f0"></div>
<div style="left:35px;top:583px;width:1075px;height:1px;background:#a0a0a0"></div>
<div style="left:89px;top:566px;width:1px;height:17px;background:#a0a0a0"></div>
<div style="left:235px;top:566px;width:1px;height:17px;background:#a0a0a0"></div>
<div style="left:282px;top:566px;width:1px;height:17px;background:#a0a0a0"></div>
<div style="left:382px;top:566px;width:1px;height:17px;background:#a0a0a0"></div>
<div style="left:482px;top:566px;width:1px;height:17px;background:#a0a0a0"></div>
<div style="left:599px;top:566px;width:1px;height:17px;background:#a0a0a0"></div>
<div style="left:662px;top:566px;width:1px;height:17px;background:#a0a0a0"></div>
<div style="left:698px;top:566px;width:1px;height:17px;background:#a0a0a0"></div>
<div style="left:773px;top:566px;width:1px;height:17px;background:#a0a0a0"></div>
<div style="left:848px;top:566px;width:1px;height:17px;background:#a0a0a0"></div>
<div style="left:923px;top:566px;width:1px;height:17px;background:#a0a0a0"></div>
<div style="left:998px;top:566px;width:1px;height:17px;background:#a0a0a0"></div>
<div style="left:1073px;top:566px;width:1px;height:17px;background:#a0a0a0"></div>
<div class="t cell" style="left:53px;top:567px;width:36px;"><span style="letter-spacing:-0.21px">J268</span></div>
<div class="t cell" style="left:91px;top:567px;width:144px;"><span style="letter-spacing:-0.14px">Dynex Hire</span></div>
<div class="t cell" style="left:237px;top:567px;width:45px;"><span style="letter-spacing:-0.16px">Active</span></div>
<div class="t cell" style="left:284px;top:567px;width:98px;"><span style="letter-spacing:0.1px">4/24/2016 08:00</span></div>
<div class="t cell" style="left:384px;top:567px;width:98px;"><span style="letter-spacing:0.1px">4/29/2016 08:00</span></div>
<div class="t cell" style="left:484px;top:567px;width:115px;"><span style="letter-spacing:-0.01px">Hewlett Packard</span></div>
<div class="t cell" style="left:601px;top:567px;width:61px;"></div>
<svg style="position:absolute;left:672px;top:568px" width="16" height="14" viewBox="0 0 16 14">
<path d="M0.5 0.5 H12.5 L15.5 3.5 V12.5 H0.5 Z" fill="url(#ng)" stroke="#c6c6c6" stroke-width="1"/>
<path d="M12.5 0.5 L15.5 3.5 H12.5 Z" fill="#bcbcbc" stroke="#c6c6c6" stroke-width="1" stroke-linejoin="round"/>
<text x="7.8" y="10.2" text-anchor="middle" font-family="Liberation Sans" font-style="italic" font-size="10.5" fill="#8e8e8e">a</text>
</svg>
<div class="t cell r" style="left:699px;top:567px;width:71px;"><span style="letter-spacing:-0.11px">$0.00</span></div>
<div class="t cell r" style="left:774px;top:567px;width:71px;"><span style="letter-spacing:-0.11px">$0.00</span></div>
<div class="t cell r" style="left:849px;top:567px;width:71px;"><span style="letter-spacing:-0.11px">$10,050.00</span></div>
<div class="t cell r" style="left:924px;top:567px;width:71px;"><span style="letter-spacing:-0.11px">$0.00</span></div>
<div class="t cell" style="left:1000px;top:567px;width:72px;"><span style="letter-spacing:-0.06px">Nothing Invoiced</span></div>
<div style="left:1086px;top:569px;width:11px;height:11px;border:1px solid #8f8f8f;box-sizing:border-box;background:#fff"></div>
<div style="left:6px;top:583px;width:12px;height:19px;background:#000"></div>
<div style="left:7px;top:584px;width:10px;height:17px;background:#fff"></div>
<div style="left:8px;top:585px;width:9px;height:16px;background:#f0f0f0"></div>
<div style="left:35px;top:601px;width:1075px;height:1px;background:#a0a0a0"></div>
<div style="left:89px;top:584px;width:1px;height:17px;background:#a0a0a0"></div>
<div style="left:235px;top:584px;width:1px;height:17px;background:#a0a0a0"></div>
<div style="left:282px;top:584px;width:1px;height:17px;background:#a0a0a0"></div>
<div style="left:382px;top:584px;width:1px;height:17px;background:#a0a0a0"></div>
<div style="left:482px;top:584px;width:1px;height:17px;background:#a0a0a0"></div>
<div style="left:599px;top:584px;width:1px;height:17px;background:#a0a0a0"></div>
<div style="left:662px;top:584px;width:1px;height:17px;background:#a0a0a0"></div>
<div style="left:698px;top:584px;width:1px;height:17px;background:#a0a0a0"></div>
<div style="left:773px;top:584px;width:1px;height:17px;background:#a0a0a0"></div>
<div style="left:848px;top:584px;width:1px;height:17px;background:#a0a0a0"></div>
<div style="left:923px;top:584px;width:1px;height:17px;background:#a0a0a0"></div>
<div style="left:998px;top:584px;width:1px;height:17px;background:#a0a0a0"></div>
<div style="left:1073px;top:584px;width:1px;height:17px;background:#a0a0a0"></div>
<div class="t cell" style="left:53px;top:585px;width:36px;"><span style="letter-spacing:-0.21px">J271</span></div>
<div class="t cell" style="left:91px;top:585px;width:144px;"><span style="letter-spacing:-0.33px">Mediacom Show</span></div>
<div class="t cell" style="left:237px;top:585px;width:45px;"><span style="letter-spacing:-0.16px">Active</span></div>
<div class="t cell" style="left:284px;top:585px;width:98px;"><span style="letter-spacing:0.15px">4/23/2016 11:00</span></div>
<div class="t cell" style="left:384px;top:585px;width:98px;"><span style="letter-spacing:0.17px">5/4/2016 11:00</span></div>
<div class="t cell" style="left:484px;top:585px;width:115px;"><span style="letter-spacing:-0.12px">Fox Corporation</span></div>
<div class="t cell" style="left:601px;top:585px;width:61px;"><span style="letter-spacing:-0.88px">FOX</span></div>
<svg style="position:absolute;left:672px;top:586px" width="16" height="14" viewBox="0 0 16 14">
<path d="M0.5 0.5 H12.5 L15.5 3.5 V12.5 H0.5 Z" fill="url(#ng)" stroke="#c6c6c6" stroke-width="1"/>
<path d="M12.5 0.5 L15.5 3.5 H12.5 Z" fill="#bcbcbc" stroke="#c6c6c6" stroke-width="1" stroke-linejoin="round"/>
<text x="7.8" y="10.2" text-anchor="middle" font-family="Liberation Sans" font-style="italic" font-size="10.5" fill="#8e8e8e">a</text>
</svg>
<div class="t cell r" style="left:699px;top:585px;width:71px;"><span style="letter-spacing:-0.11px">$0.00</span></div>
<div class="t cell r" style="left:774px;top:585px;width:71px;"><span style="letter-spacing:-0.11px">$0.00</span></div>
<div class="t cell r" style="left:849px;top:585px;width:71px;"><span style="letter-spacing:-0.11px">$30,200.00</span></div>
<div class="t cell r" style="left:924px;top:585px;width:71px;"><span style="letter-spacing:-0.11px">$0.00</span></div>
<div class="t cell" style="left:1000px;top:585px;width:72px;"><span style="letter-spacing:-0.06px">Nothing Invoiced</span></div>
<div style="left:1086px;top:587px;width:11px;height:11px;border:1px solid #8f8f8f;box-sizing:border-box;background:#fff"></div>
<div style="left:6px;top:601px;width:12px;height:19px;background:#000"></div>
<div style="left:7px;top:602px;width:10px;height:17px;background:#fff"></div>
<div style="left:8px;top:603px;width:9px;height:16px;background:#f0f0f0"></div>
<div style="left:35px;top:619px;width:1075px;height:1px;background:#a0a0a0"></div>
<div style="left:89px;top:602px;width:1px;height:17px;background:#a0a0a0"></div>
<div style="left:235px;top:602px;width:1px;height:17px;background:#a0a0a0"></div>
<div style="left:282px;top:602px;width:1px;height:17px;background:#a0a0a0"></div>
<div style="left:382px;top:602px;width:1px;height:17px;background:#a0a0a0"></div>
<div style="left:482px;top:602px;width:1px;height:17px;background:#a0a0a0"></div>
<div style="left:599px;top:602px;width:1px;height:17px;background:#a0a0a0"></div>
<div style="left:662px;top:602px;width:1px;height:17px;background:#a0a0a0"></div>
<div style="left:698px;top:602px;width:1px;height:17px;background:#a0a0a0"></div>
<div style="left:773px;top:602px;width:1px;height:17px;background:#a0a0a0"></div>
<div style="left:848px;top:602px;width:1px;height:17px;background:#a0a0a0"></div>
<div style="left:923px;top:602px;width:1px;height:17px;background:#a0a0a0"></div>
<div style="left:998px;top:602px;width:1px;height:17px;background:#a0a0a0"></div>
<div style="left:1073px;top:602px;width:1px;height:17px;background:#a0a0a0"></div>
<div style="left:38px;top:605px;width:11px;height:11px;border:1px solid #a0a0a0;box-sizing:border-box;background:#f0f0f0;box-shadow:inset 1px 1px 0 #fff"></div>
<div style="left:41px;top:610px;width:5px;height:1px;background:#000"></div>
<div style="left:43px;top:608px;width:1px;height:5px;background:#000"></div>
<div class="t cell" style="left:53px;top:603px;width:36px;"><span style="letter-spacing:-0.21px">J262</span></div>
<div class="t cell" style="left:91px;top:603px;width:144px;"><span style="letter-spacing:-0.21px">Office Depot Show</span></div>
<div class="t cell" style="left:237px;top:603px;width:45px;"><span style="letter-spacing:-0.16px">Active</span></div>
<div class="t cell" style="left:284px;top:603px;width:98px;"><span style="letter-spacing:0.1px">4/23/2016 08:00</span></div>
<div class="t cell" style="left:384px;top:603px;width:98px;"><span style="letter-spacing:0.1px">4/28/2016 08:00</span></div>
<div class="t cell" style="left:484px;top:603px;width:115px;"><span style="letter-spacing:-0.12px">Fox Corporation</span></div>
<div class="t cell" style="left:601px;top:603px;width:61px;"><span style="letter-spacing:-0.88px">FOX</span></div>
<svg style="position:absolute;left:672px;top:604px" width="16" height="14" viewBox="0 0 16 14">
<path d="M0.5 0.5 H12.5 L15.5 3.5 V12.5 H0.5 Z" fill="url(#ng)" stroke="#c6c6c6" stroke-width="1"/>
<path d="M12.5 0.5 L15.5 3.5 H12.5 Z" fill="#bcbcbc" stroke="#c6c6c6" stroke-width="1" stroke-linejoin="round"/>
<text x="7.8" y="10.2" text-anchor="middle" font-family="Liberation Sans" font-style="italic" font-size="10.5" fill="#8e8e8e">a</text>
</svg>
<div class="t cell r" style="left:699px;top:603px;width:71px;"><span style="letter-spacing:-0.11px">$0.00</span></div>
<div class="t cell r" style="left:774px;top:603px;width:71px;"><span style="letter-spacing:-0.11px">$0.00</span></div>
<div class="t cell r" style="left:849px;top:603px;width:71px;"><span style="letter-spacing:-0.11px">$33,150.00</span></div>
<div class="t cell r" style="left:924px;top:603px;width:71px;"><span style="letter-spacing:-0.11px">$33,500.00</span></div>
<div class="t cell" style="left:999px;top:603px;width:74px;text-align:center"><span style="letter-spacing:0.05px">Fully Invoiced</span></div>
<div style="left:1086px;top:605px;width:11px;height:11px;border:1px solid #8f8f8f;box-sizing:border-box;background:#fff"></div>
<div style="left:6px;top:619px;width:12px;height:19px;background:#000"></div>
<div style="left:7px;top:620px;width:10px;height:17px;background:#fff"></div>
<div style="left:8px;top:621px;width:9px;height:16px;background:#f0f0f0"></div>
<div style="left:35px;top:637px;width:1075px;height:1px;background:#a0a0a0"></div>
<div style="left:89px;top:620px;width:1px;height:17px;background:#a0a0a0"></div>
<div style="left:235px;top:620px;width:1px;height:17px;background:#a0a0a0"></div>
<div style="left:282px;top:620px;width:1px;height:17px;background:#a0a0a0"></div>
<div style="left:382px;top:620px;width:1px;height:17px;background:#a0a0a0"></div>
<div style="left:482px;top:620px;width:1px;height:17px;background:#a0a0a0"></div>
<div style="left:599px;top:620px;width:1px;height:17px;background:#a0a0a0"></div>
<div style="left:662px;top:620px;width:1px;height:17px;background:#a0a0a0"></div>
<div style="left:698px;top:620px;width:1px;height:17px;background:#a0a0a0"></div>
<div style="left:773px;top:620px;width:1px;height:17px;background:#a0a0a0"></div>
<div style="left:848px;top:620px;width:1px;height:17px;background:#a0a0a0"></div>
<div style="left:923px;top:620px;width:1px;height:17px;background:#a0a0a0"></div>
<div style="left:998px;top:620px;width:1px;height:17px;background:#a0a0a0"></div>
<div style="left:1073px;top:620px;width:1px;height:17px;background:#a0a0a0"></div>
<div class="t cell" style="left:53px;top:621px;width:36px;"><span style="letter-spacing:-0.21px">J263</span></div>
<div class="t cell" style="left:91px;top:621px;width:144px;"><span style="letter-spacing:-0.25px">McDonalds Meeting</span></div>
<div class="t cell" style="left:237px;top:621px;width:45px;"><span style="letter-spacing:-0.16px">Active</span></div>
<div class="t cell" style="left:284px;top:621px;width:98px;"><span style="letter-spacing:0.1px">4/23/2016 08:00</span></div>
<div class="t cell" style="left:384px;top:621px;width:98px;"><span style="letter-spacing:0.1px">4/28/2016 08:00</span></div>
<div class="t cell" style="left:484px;top:621px;width:115px;"><span style="letter-spacing:-0.34px">McDonalds</span></div>
<div class="t cell" style="left:601px;top:621px;width:61px;"></div>
<svg style="position:absolute;left:672px;top:622px" width="16" height="14" viewBox="0 0 16 14">
<path d="M0.5 0.5 H12.5 L15.5 3.5 V12.5 H0.5 Z" fill="url(#ng)" stroke="#c6c6c6" stroke-width="1"/>
<path d="M12.5 0.5 L15.5 3.5 H12.5 Z" fill="#bcbcbc" stroke="#c6c6c6" stroke-width="1" stroke-linejoin="round"/>
<text x="7.8" y="10.2" text-anchor="middle" font-family="Liberation Sans" font-style="italic" font-size="10.5" fill="#8e8e8e">a</text>
</svg>
<div class="t cell r" style="left:699px;top:621px;width:71px;"><span style="letter-spacing:-0.11px">$0.00</span></div>
<div class="t cell r" style="left:774px;top:621px;width:71px;"><span style="letter-spacing:-0.11px">$0.00</span></div>
<div class="t cell r" style="left:849px;top:621px;width:71px;"><span style="letter-spacing:-0.11px">$12,937.50</span></div>
<div class="t cell r" style="left:924px;top:621px;width:71px;"><span style="letter-spacing:-0.11px">$0.00</span></div>
<div class="t cell" style="left:1000px;top:621px;width:72px;"><span style="letter-spacing:-0.06px">Nothing Invoiced</span></div>
<div style="left:1086px;top:623px;width:11px;height:11px;border:1px solid #8f8f8f;box-sizing:border-box;background:#fff"></div>
<div style="left:6px;top:637px;width:12px;height:19px;background:#000"></div>
<div style="left:7px;top:638px;width:10px;height:17px;background:#fff"></div>
<div style="left:8px;top:639px;width:9px;height:16px;background:#f0f0f0"></div>
<div style="left:35px;top:655px;width:1075px;height:1px;background:#a0a0a0"></div>
<div style="left:89px;top:638px;width:1px;height:17px;background:#a0a0a0"></div>
<div style="left:235px;top:638px;width:1px;height:17px;background:#a0a0a0"></div>
<div style="left:282px;top:638px;width:1px;height:17px;background:#a0a0a0"></div>
<div style="left:382px;top:638px;width:1px;height:17px;background:#a0a0a0"></div>
<div style="left:482px;top:638px;width:1px;height:17px;background:#a0a0a0"></div>
<div style="left:599px;top:638px;width:1px;height:17px;background:#a0a0a0"></div>
<div style="left:662px;top:638px;width:1px;height:17px;background:#a0a0a0"></div>
<div style="left:698px;top:638px;width:1px;height:17px;background:#a0a0a0"></div>
<div style="left:773px;top:638px;width:1px;height:17px;background:#a0a0a0"></div>
<div style="left:848px;top:638px;width:1px;height:17px;background:#a0a0a0"></div>
<div style="left:923px;top:638px;width:1px;height:17px;background:#a0a0a0"></div>
<div style="left:998px;top:638px;width:1px;height:17px;background:#a0a0a0"></div>
<div style="left:1073px;top:638px;width:1px;height:17px;background:#a0a0a0"></div>
<div class="t cell" style="left:53px;top:639px;width:36px;"><span style="letter-spacing:-0.21px">J269</span></div>
<div class="t cell" style="left:91px;top:639px;width:144px;"><span style="letter-spacing:-0.24px">X Factor Show</span></div>
<div class="t cell" style="left:237px;top:639px;width:45px;"><span style="letter-spacing:-0.16px">Active</span></div>
<div class="t cell" style="left:284px;top:639px;width:98px;"><span style="letter-spacing:0.1px">4/23/2016 08:00</span></div>
<div class="t cell" style="left:384px;top:639px;width:98px;"><span style="letter-spacing:0.11px">5/4/2016 08:00</span></div>
<div class="t cell" style="left:484px;top:639px;width:115px;"><span style="letter-spacing:-0.12px">Fox Corporation</span></div>
<div class="t cell" style="left:601px;top:639px;width:61px;"><span style="letter-spacing:-0.88px">FOX</span></div>
<svg style="position:absolute;left:672px;top:640px" width="16" height="14" viewBox="0 0 16 14">
<path d="M0.5 0.5 H12.5 L15.5 3.5 V12.5 H0.5 Z" fill="url(#ng)" stroke="#c6c6c6" stroke-width="1"/>
<path d="M12.5 0.5 L15.5 3.5 H12.5 Z" fill="#bcbcbc" stroke="#c6c6c6" stroke-width="1" stroke-linejoin="round"/>
<text x="7.8" y="10.2" text-anchor="middle" font-family="Liberation Sans" font-style="italic" font-size="10.5" fill="#8e8e8e">a</text>
</svg>
<div class="t cell r" style="left:699px;top:639px;width:71px;"><span style="letter-spacing:-0.11px">$0.00</span></div>
<div class="t cell r" style="left:774px;top:639px;width:71px;"><span style="letter-spacing:-0.11px">$0.00</span></div>
<div class="t cell r" style="left:849px;top:639px;width:71px;"><span style="letter-spacing:-0.11px">$10,000.00</span></div>
<div class="t cell r" style="left:924px;top:639px;width:71px;"><span style="letter-spacing:-0.11px">$0.00</span></div>
<div class="t cell" style="left:1000px;top:639px;width:72px;"><span style="letter-spacing:-0.06px">Nothing Invoiced</span></div>
<div style="left:1086px;top:641px;width:11px;height:11px;border:1px solid #8f8f8f;box-sizing:border-box;background:#fff"></div>
<div style="left:6px;top:655px;width:12px;height:19px;background:#000"></div>
<div style="left:7px;top:656px;width:10px;height:17px;background:#fff"></div>
<div style="left:8px;top:657px;width:9px;height:16px;background:#f0f0f0"></div>
<div style="left:35px;top:673px;width:1075px;height:1px;background:#a0a0a0"></div>
<div style="left:89px;top:656px;width:1px;height:17px;background:#a0a0a0"></div>
<div style="left:235px;top:656px;width:1px;height:17px;background:#a0a0a0"></div>
<div style="left:282px;top:656px;width:1px;height:17px;background:#a0a0a0"></div>
<div style="left:382px;top:656px;width:1px;height:17px;background:#a0a0a0"></div>
<div style="left:482px;top:656px;width:1px;height:17px;background:#a0a0a0"></div>
<div style="left:599px;top:656px;width:1px;height:17px;background:#a0a0a0"></div>
<div style="left:662px;top:656px;width:1px;height:17px;background:#a0a0a0"></div>
<div style="left:698px;top:656px;width:1px;height:17px;background:#a0a0a0"></div>
<div style="left:773px;top:656px;width:1px;height:17px;background:#a0a0a0"></div>
<div style="left:848px;top:656px;width:1px;height:17px;background:#a0a0a0"></div>
<div style="left:923px;top:656px;width:1px;height:17px;background:#a0a0a0"></div>
<div style="left:998px;top:656px;width:1px;height:17px;background:#a0a0a0"></div>
<div style="left:1073px;top:656px;width:1px;height:17px;background:#a0a0a0"></div>
<div class="t cell" style="left:53px;top:657px;width:36px;"><span style="letter-spacing:-0.21px">J270</span></div>
<div class="t cell" style="left:91px;top:657px;width:144px;"><span style="letter-spacing:-0.33px">McDonalds Show</span></div>
<div class="t cell" style="left:237px;top:657px;width:45px;"><span style="letter-spacing:-0.16px">Active</span></div>
<div class="t cell" style="left:284px;top:657px;width:98px;"><span style="letter-spacing:0.1px">4/23/2016 08:00</span></div>
<div class="t cell" style="left:384px;top:657px;width:98px;"><span style="letter-spacing:0.11px">5/3/2016 14:00</span></div>
<div class="t cell" style="left:484px;top:657px;width:115px;"><span style="letter-spacing:-0.03px">FIJI Water Company</span></div>
<div class="t cell" style="left:601px;top:657px;width:61px;"></div>
<svg style="position:absolute;left:672px;top:658px" width="16" height="14" viewBox="0 0 16 14">
<path d="M0.5 0.5 H12.5 L15.5 3.5 V12.5 H0.5 Z" fill="url(#ng)" stroke="#c6c6c6" stroke-width="1"/>
<path d="M12.5 0.5 L15.5 3.5 H12.5 Z" fill="#bcbcbc" stroke="#c6c6c6" stroke-width="1" stroke-linejoin="round"/>
<text x="7.8" y="10.2" text-anchor="middle" font-family="Liberation Sans" font-style="italic" font-size="10.5" fill="#8e8e8e">a</text>
</svg>
<div class="t cell r" style="left:699px;top:657px;width:71px;"><span style="letter-spacing:-0.11px">$0.00</span></div>
<div class="t cell r" style="left:774px;top:657px;width:71px;"><span style="letter-spacing:-0.11px">$0.00</span></div>
<div class="t cell r" style="left:849px;top:657px;width:71px;"><span style="letter-spacing:-0.11px">$0.00</span></div>
<div class="t cell r" style="left:924px;top:657px;width:71px;"><span style="letter-spacing:-0.11px">$0.00</span></div>
<div class="t cell" style="left:1000px;top:657px;width:72px;"><span style="letter-spacing:-0.02px">Nothing To Invoice</span></div>
<div style="left:1086px;top:659px;width:11px;height:11px;border:1px solid #8f8f8f;box-sizing:border-box;background:#fff"></div>
<div style="left:6px;top:673px;width:12px;height:19px;background:#000"></div>
<div style="left:7px;top:674px;width:10px;height:17px;background:#fff"></div>
<div style="left:8px;top:675px;width:9px;height:16px;background:#f0f0f0"></div>
<div style="left:35px;top:691px;width:1075px;height:1px;background:#a0a0a0"></div>
<div style="left:89px;top:674px;width:1px;height:17px;background:#a0a0a0"></div>
<div style="left:235px;top:674px;width:1px;height:17px;background:#a0a0a0"></div>
<div style="left:282px;top:674px;width:1px;height:17px;background:#a0a0a0"></div>
<div style="left:382px;top:674px;width:1px;height:17px;background:#a0a0a0"></div>
<div style="left:482px;top:674px;width:1px;height:17px;background:#a0a0a0"></div>
<div style="left:599px;top:674px;width:1px;height:17px;background:#a0a0a0"></div>
<div style="left:662px;top:674px;width:1px;height:17px;background:#a0a0a0"></div>
<div style="left:698px;top:674px;width:1px;height:17px;background:#a0a0a0"></div>
<div style="left:773px;top:674px;width:1px;height:17px;background:#a0a0a0"></div>
<div style="left:848px;top:674px;width:1px;height:17px;background:#a0a0a0"></div>
<div style="left:923px;top:674px;width:1px;height:17px;background:#a0a0a0"></div>
<div style="left:998px;top:674px;width:1px;height:17px;background:#a0a0a0"></div>
<div style="left:1073px;top:674px;width:1px;height:17px;background:#a0a0a0"></div>
<div class="t cell" style="left:53px;top:675px;width:36px;"><span style="letter-spacing:-0.21px">J272</span></div>
<div class="t cell" style="left:91px;top:675px;width:144px;"><span style="letter-spacing:-0.44px">Bic Pen TV show</span></div>
<div class="t cell" style="left:237px;top:675px;width:45px;"><span style="letter-spacing:-0.16px">Active</span></div>
<div class="t cell" style="left:284px;top:675px;width:98px;"><span style="letter-spacing:0.1px">4/23/2016 08:00</span></div>
<div class="t cell" style="left:384px;top:675px;width:98px;"><span style="letter-spacing:0.11px">5/4/2016 08:00</span></div>
<div class="t cell" style="left:484px;top:675px;width:115px;"><span style="letter-spacing:-0.12px">Fox Corporation</span></div>
<div class="t cell" style="left:601px;top:675px;width:61px;"><span style="letter-spacing:-0.88px">FOX</span></div>
<svg style="position:absolute;left:672px;top:676px" width="16" height="14" viewBox="0 0 16 14">
<path d="M0.5 0.5 H12.5 L15.5 3.5 V12.5 H0.5 Z" fill="url(#ng)" stroke="#c6c6c6" stroke-width="1"/>
<path d="M12.5 0.5 L15.5 3.5 H12.5 Z" fill="#bcbcbc" stroke="#c6c6c6" stroke-width="1" stroke-linejoin="round"/>
<text x="7.8" y="10.2" text-anchor="middle" font-family="Liberation Sans" font-style="italic" font-size="10.5" fill="#8e8e8e">a</text>
</svg>
<div class="t cell r" style="left:699px;top:675px;width:71px;"><span style="letter-spacing:-0.11px">$0.00</span></div>
<div class="t cell r" style="left:774px;top:675px;width:71px;"><span style="letter-spacing:-0.11px">$0.00</span></div>
<div class="t cell r" style="left:849px;top:675px;width:71px;"><span style="letter-spacing:-0.1px">$8,532.47</span></div>
<div class="t cell r" style="left:924px;top:675px;width:71px;"><span style="letter-spacing:-0.11px">$0.00</span></div>
<div class="t cell" style="left:1000px;top:675px;width:72px;"><span style="letter-spacing:-0.06px">Nothing Invoiced</span></div>
<div style="left:1086px;top:677px;width:11px;height:11px;border:1px solid #8f8f8f;box-sizing:border-box;background:#fff"></div>
<div style="left:6px;top:691px;width:12px;height:19px;background:#000"></div>
<div style="left:7px;top:692px;width:10px;height:17px;background:#fff"></div>
<div style="left:8px;top:693px;width:9px;height:16px;background:#f0f0f0"></div>
<div style="left:35px;top:709px;width:1075px;height:1px;background:#a0a0a0"></div>
<div style="left:89px;top:692px;width:1px;height:17px;background:#a0a0a0"></div>
<div style="left:235px;top:692px;width:1px;height:17px;background:#a0a0a0"></div>
<div style="left:282px;top:692px;width:1px;height:17px;background:#a0a0a0"></div>
<div style="left:382px;top:692px;width:1px;height:17px;background:#a0a0a0"></div>
<div style="left:482px;top:692px;width:1px;height:17px;background:#a0a0a0"></div>
<div style="left:599px;top:692px;width:1px;height:17px;background:#a0a0a0"></div>
<div style="left:662px;top:692px;width:1px;height:17px;background:#a0a0a0"></div>
<div style="left:698px;top:692px;width:1px;height:17px;background:#a0a0a0"></div>
<div style="left:773px;top:692px;width:1px;height:17px;background:#a0a0a0"></div>
<div style="left:848px;top:692px;width:1px;height:17px;background:#a0a0a0"></div>
<div style="left:923px;top:692px;width:1px;height:17px;background:#a0a0a0"></div>
<div style="left:998px;top:692px;width:1px;height:17px;background:#a0a0a0"></div>
<div style="left:1073px;top:692px;width:1px;height:17px;background:#a0a0a0"></div>
<div class="t cell" style="left:53px;top:693px;width:36px;"><span style="letter-spacing:-0.21px">J273</span></div>
<div class="t cell" style="left:91px;top:693px;width:144px;"><span style="letter-spacing:-0.21px">Timex Show</span></div>
<div class="t cell" style="left:237px;top:693px;width:45px;"><span style="letter-spacing:-0.16px">Active</span></div>
<div class="t cell" style="left:284px;top:693px;width:98px;"><span style="letter-spacing:0.1px">4/23/2016 08:00</span></div>
<div class="t cell" style="left:384px;top:693px;width:98px;"><span style="letter-spacing:0.1px">4/28/2016 08:00</span></div>
<div class="t cell" style="left:484px;top:693px;width:115px;"><span style="letter-spacing:-0.12px">Fox Corporation</span></div>
<div class="t cell" style="left:601px;top:693px;width:61px;"><span style="letter-spacing:-0.88px">FOX</span></div>
<svg style="position:absolute;left:672px;top:694px" width="16" height="14" viewBox="0 0 16 14">
<path d="M0.5 0.5 H12.5 L15.5 3.5 V12.5 H0.5 Z" fill="url(#ng)" stroke="#c6c6c6" stroke-width="1"/>
<path d="M12.5 0.5 L15.5 3.5 H12.5 Z" fill="#bcbcbc" stroke="#c6c6c6" stroke-width="1" stroke-linejoin="round"/>
<text x="7.8" y="10.2" text-anchor="middle" font-family="Liberation Sans" font-style="italic" font-size="10.5" fill="#8e8e8e">a</text>
</svg>
<div class="t cell r" style="left:699px;top:693px;width:71px;"><span style="letter-spacing:-0.11px">$0.00</span></div>
<div class="t cell r" style="left:774px;top:693px;width:71px;"><span style="letter-spacing:-0.11px">$0.00</span></div>
<div class="t cell r" style="left:849px;top:693px;width:71px;"><span style="letter-spacing:-0.1px">$9,850.00</span></div>
<div class="t cell r" style="left:924px;top:693px;width:71px;"><span style="letter-spacing:-0.11px">$0.00</span></div>
<div class="t cell" style="left:1000px;top:693px;width:72px;"><span style="letter-spacing:-0.06px">Nothing Invoiced</span></div>
<div style="left:1086px;top:695px;width:11px;height:11px;border:1px solid #8f8f8f;box-sizing:border-box;background:#fff"></div>
<div style="left:6px;top:709px;width:12px;height:19px;background:#000"></div>
<div style="left:7px;top:710px;width:10px;height:17px;background:#fff"></div>
<div style="left:8px;top:711px;width:9px;height:16px;background:#f0f0f0"></div>
<div style="left:35px;top:727px;width:1075px;height:1px;background:#a0a0a0"></div>
<div style="left:89px;top:710px;width:1px;height:17px;background:#a0a0a0"></div>
<div style="left:235px;top:710px;width:1px;height:17px;background:#a0a0a0"></div>
<div style="left:282px;top:710px;width:1px;height:17px;background:#a0a0a0"></div>
<div style="left:382px;top:710px;width:1px;height:17px;background:#a0a0a0"></div>
<div style="left:482px;top:710px;width:1px;height:17px;background:#a0a0a0"></div>
<div style="left:599px;top:710px;width:1px;height:17px;background:#a0a0a0"></div>
<div style="left:662px;top:710px;width:1px;height:17px;background:#a0a0a0"></div>
<div style="left:698px;top:710px;width:1px;height:17px;background:#a0a0a0"></div>
<div style="left:773px;top:710px;width:1px;height:17px;background:#a0a0a0"></div>
<div style="left:848px;top:710px;width:1px;height:17px;background:#a0a0a0"></div>
<div style="left:923px;top:710px;width:1px;height:17px;background:#a0a0a0"></div>
<div style="left:998px;top:710px;width:1px;height:17px;background:#a0a0a0"></div>
<div style="left:1073px;top:710px;width:1px;height:17px;background:#a0a0a0"></div>
<div class="t cell" style="left:53px;top:711px;width:36px;"><span style="letter-spacing:-0.21px">J232</span></div>
<div class="t cell" style="left:91px;top:711px;width:144px;"><span style="letter-spacing:-0.25px">McDonalds Meeting</span></div>
<div class="t cell" style="left:237px;top:711px;width:45px;">Confirmed</div>
<div class="t cell" style="left:284px;top:711px;width:98px;"><span style="letter-spacing:0.1px">4/19/2016 08:00</span></div>
<div class="t cell" style="left:384px;top:711px;width:98px;"><span style="letter-spacing:0.1px">4/30/2016 08:00</span></div>
<div class="t cell" style="left:484px;top:711px;width:115px;"><span style="letter-spacing:-0.39px">SE Systems</span></div>
<div class="t cell" style="left:601px;top:711px;width:61px;"></div>
<svg style="position:absolute;left:672px;top:712px" width="16" height="14" viewBox="0 0 16 14">
<path d="M0.5 0.5 H12.5 L15.5 3.5 V12.5 H0.5 Z" fill="url(#ng)" stroke="#c6c6c6" stroke-width="1"/>
<path d="M12.5 0.5 L15.5 3.5 H12.5 Z" fill="#bcbcbc" stroke="#c6c6c6" stroke-width="1" stroke-linejoin="round"/>
<text x="7.8" y="10.2" text-anchor="middle" font-family="Liberation Sans" font-style="italic" font-size="10.5" fill="#8e8e8e">a</text>
</svg>
<div class="t cell r" style="left:699px;top:711px;width:71px;"><span style="letter-spacing:-0.1px">$9,540.00</span></div>
<div class="t cell r" style="left:774px;top:711px;width:71px;"><span style="letter-spacing:-0.11px">$0.00</span></div>
<div class="t cell r" style="left:849px;top:711px;width:71px;"><span style="letter-spacing:-0.1px">$3,681.00</span></div>
<div class="t cell r" style="left:924px;top:711px;width:71px;"><span style="letter-spacing:-0.11px">$0.00</span></div>
<div class="t cell" style="left:1000px;top:711px;width:72px;"><span style="letter-spacing:-0.06px">Nothing Invoiced</span></div>
<div style="left:1086px;top:713px;width:11px;height:11px;border:1px solid #8f8f8f;box-sizing:border-box;background:#fff"></div>
<div style="left:6px;top:727px;width:12px;height:19px;background:#000"></div>
<div style="left:7px;top:728px;width:10px;height:17px;background:#fff"></div>
<div style="left:8px;top:729px;width:9px;height:16px;background:#f0f0f0"></div>
<div style="left:35px;top:745px;width:1075px;height:1px;background:#a0a0a0"></div>
<div style="left:89px;top:728px;width:1px;height:17px;background:#a0a0a0"></div>
<div style="left:235px;top:728px;width:1px;height:17px;background:#a0a0a0"></div>
<div style="left:282px;top:728px;width:1px;height:17px;background:#a0a0a0"></div>
<div style="left:382px;top:728px;width:1px;height:17px;background:#a0a0a0"></div>
<div style="left:482px;top:728px;width:1px;height:17px;background:#a0a0a0"></div>
<div style="left:599px;top:728px;width:1px;height:17px;background:#a0a0a0"></div>
<div style="left:662px;top:728px;width:1px;height:17px;background:#a0a0a0"></div>
<div style="left:698px;top:728px;width:1px;height:17px;background:#a0a0a0"></div>
<div style="left:773px;top:728px;width:1px;height:17px;background:#a0a0a0"></div>
<div style="left:848px;top:728px;width:1px;height:17px;background:#a0a0a0"></div>
<div style="left:923px;top:728px;width:1px;height:17px;background:#a0a0a0"></div>
<div style="left:998px;top:728px;width:1px;height:17px;background:#a0a0a0"></div>
<div style="left:1073px;top:728px;width:1px;height:17px;background:#a0a0a0"></div>
<div style="left:38px;top:731px;width:11px;height:11px;border:1px solid #a0a0a0;box-sizing:border-box;background:#f0f0f0;box-shadow:inset 1px 1px 0 #fff"></div>
<div style="left:41px;top:736px;width:5px;height:1px;background:#000"></div>
<div style="left:43px;top:734px;width:1px;height:5px;background:#000"></div>
<div class="t cell" style="left:53px;top:729px;width:36px;"><span style="letter-spacing:-0.21px">J249</span></div>
<div class="t cell" style="left:91px;top:729px;width:144px;"><span style="letter-spacing:-0.25px">Newsweek Magazine Show</span></div>
<div class="t cell" style="left:237px;top:729px;width:45px;">Confirmed</div>
<div class="t cell" style="left:284px;top:729px;width:98px;"><span style="letter-spacing:0.1px">4/19/2016 08:00</span></div>
<div class="t cell" style="left:384px;top:729px;width:98px;"><span style="letter-spacing:0.1px">4/24/2016 08:00</span></div>
<div class="t cell" style="left:484px;top:729px;width:115px;"><span style="letter-spacing:-0.12px">Fox Corporation</span></div>
<div class="t cell" style="left:601px;top:729px;width:61px;"><span style="letter-spacing:-0.88px">FOX</span></div>
<svg style="position:absolute;left:672px;top:730px" width="16" height="14" viewBox="0 0 16 14">
<path d="M0.5 0.5 H12.5 L15.5 3.5 V12.5 H0.5 Z" fill="url(#ng)" stroke="#c6c6c6" stroke-width="1"/>
<path d="M12.5 0.5 L15.5 3.5 H12.5 Z" fill="#bcbcbc" stroke="#c6c6c6" stroke-width="1" stroke-linejoin="round"/>
<text x="7.8" y="10.2" text-anchor="middle" font-family="Liberation Sans" font-style="italic" font-size="10.5" fill="#8e8e8e">a</text>
</svg>
<div class="t cell r" style="left:699px;top:729px;width:71px;"><span style="letter-spacing:-0.11px">$0.00</span></div>
<div class="t cell r" style="left:774px;top:729px;width:71px;"><span style="letter-spacing:-0.11px">$0.00</span></div>
<div class="t cell r" style="left:849px;top:729px;width:71px;"><span style="letter-spacing:-0.1px">$9,400.00</span></div>
<div class="t cell r" style="left:924px;top:729px;width:71px;"><span style="letter-spacing:-0.11px">$29,700.00</span></div>
<div class="t cell" style="left:999px;top:729px;width:74px;text-align:center"><span style="letter-spacing:0.05px">Fully Invoiced</span></div>
<div style="left:1086px;top:731px;width:11px;height:11px;border:1px solid #8f8f8f;box-sizing:border-box;background:#fff"></div>
<div style="left:6px;top:746px;width:1106px;height:1px;background:#a0a0a0"></div>
<div style="left:5px;top:747px;width:1126px;height:3px;background:#f0f0f0"></div>
<div style="left:1110px;top:179px;width:1px;height:168px;background:#a0a0a0"></div>
<div style="left:1110px;top:422px;width:1px;height:324px;background:#a0a0a0"></div>
<div style="left:1111px;top:135px;width:17px;height:611px;background:#f4f4f4;background-image:repeating-conic-gradient(#e6e6e6 0 25%, #fbfbfb 0 50%);background-size:2px 2px"></div>
<div style="left:1128px;top:152px;width:1px;height:595px;background:#a8a8a8"></div>
<div style="left:1111px;top:134px;width:17px;height:17px;background:#000"></div>
<div style="left:1112px;top:135px;width:15px;height:15px;background:#fff"></div>
<div style="left:1113px;top:136px;width:14px;height:14px;background:#efefef"></div>
<svg style="position:absolute;left:1115px;top:140px" width="10" height="6" viewBox="0 0 10 6"><path d="M0 5.5 H9.5 L4.75 0.5 Z" fill="#000"/></svg>
<div style="left:1111px;top:151px;width:17px;height:375px;background:#000"></div>
<div style="left:1112px;top:152px;width:15px;height:373px;background:#fff"></div>
<div style="left:1113px;top:153px;width:14px;height:372px;background:#efefef"></div>
<div style="left:1111px;top:729px;width:17px;height:17px;background:#000"></div>
<div style="left:1112px;top:730px;width:15px;height:15px;background:#fff"></div>
<div style="left:1113px;top:731px;width:14px;height:14px;background:#efefef"></div>
<svg style="position:absolute;left:1115px;top:735px" width="10" height="6" viewBox="0 0 10 6"><path d="M0 0.5 H9.5 L4.75 5.5 Z" fill="#000"/></svg>
</body></html>
